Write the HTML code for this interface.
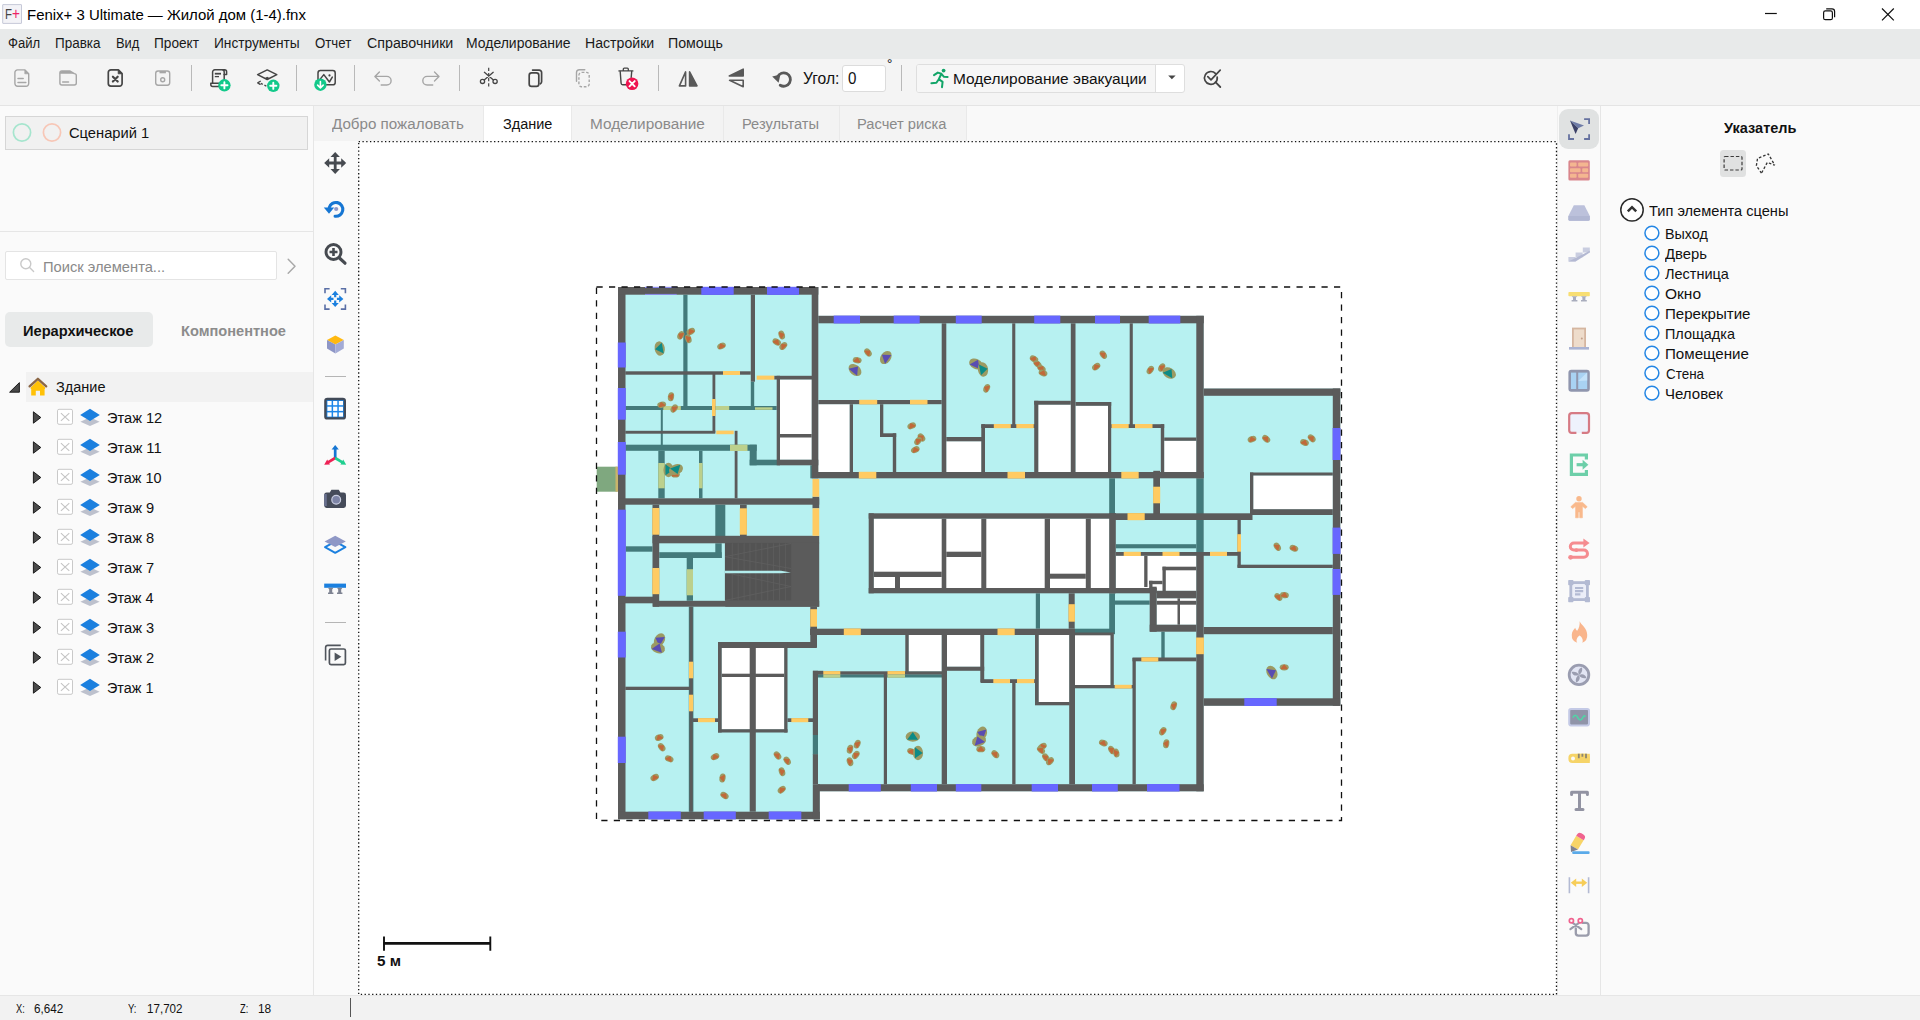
<!DOCTYPE html>
<html lang="ru"><head><meta charset="utf-8"><title>Fenix+ 3 Ultimate</title>
<style>
html,body{margin:0;padding:0;background:#fff;}
body{width:1920px;height:1020px;overflow:hidden;position:relative;font-family:"Liberation Sans", sans-serif;}
.b{position:absolute;box-sizing:border-box;}
.t{position:absolute;white-space:pre;line-height:1;transform-origin:0 0;display:block;}
svg{position:absolute;left:0;top:0;}
</style></head>
<body>
<div class="b" style="left:0px;top:0px;width:1920px;height:29px;background:#ffffff;"></div>
<div class="b" style="left:0px;top:29px;width:1920px;height:29.6px;background:#e8eaea;"></div>
<div class="b" style="left:0px;top:58.6px;width:1920px;height:46.4px;background:#f4f4f4;"></div>
<div class="b" style="left:0px;top:105px;width:1920px;height:1px;background:#e4e4e4;"></div>
<div class="b" style="left:0px;top:106px;width:1920px;height:889px;background:#fafafa;"></div>
<div class="b" style="left:313px;top:106px;width:1px;height:889px;background:#e6e6e6;"></div>
<div class="b" style="left:0px;top:231px;width:313px;height:1px;background:#e6e6e6;"></div>
<div class="b" style="left:5.3px;top:116px;width:302.3px;height:33.5px;background:#f1f1f1;border:1px solid #d6d6d6;"></div>
<div class="b" style="left:5.3px;top:250.5px;width:271.3px;height:29.9px;background:#ffffff;border:1px solid #e4e4e4;border-radius:2px;"></div>
<div class="b" style="left:5.3px;top:312.4px;width:147.7px;height:34.2px;background:#e8eaea;border-radius:5px;"></div>
<div class="b" style="left:26px;top:372.3px;width:287px;height:29.5px;background:#f2f2f2;"></div>
<div class="b" style="left:314px;top:106px;width:1243px;height:34.5px;background:#f3f3f3;"></div>
<div class="b" style="left:967.4px;top:106px;width:589.6px;height:35px;background:#f9f9f9;"></div>
<div class="b" style="left:1557px;top:106px;width:1px;height:889px;background:#efefef;"></div>
<div class="b" style="left:483.6px;top:106px;width:87.6px;height:34.5px;background:#ffffff;"></div>
<div class="b" style="left:483.2px;top:106px;width:1px;height:34.5px;background:#e9e9e9;"></div>
<div class="b" style="left:571.2px;top:106px;width:1px;height:34.5px;background:#e9e9e9;"></div>
<div class="b" style="left:722.9px;top:106px;width:1px;height:34.5px;background:#e9e9e9;"></div>
<div class="b" style="left:838.5px;top:106px;width:1px;height:34.5px;background:#e9e9e9;"></div>
<div class="b" style="left:966.4px;top:106px;width:1px;height:34.5px;background:#e9e9e9;"></div>
<div class="b" style="left:358.5px;top:141.5px;width:1198px;height:853px;background:#ffffff;"></div>
<div class="b" style="left:1600px;top:106px;width:1px;height:889px;background:#e6e6e6;"></div>
<div class="b" style="left:1559.4px;top:109.2px;width:39.4px;height:39.7px;background:#e0e2e2;border-radius:9px;"></div>
<div class="b" style="left:1720.2px;top:150.2px;width:25.7px;height:26.6px;background:#e0e1e1;border-radius:3.5px;"></div>
<div class="b" style="left:0px;top:995px;width:1920px;height:25px;background:#f2f2f2;"></div>
<div class="b" style="left:0px;top:995px;width:1920px;height:1px;background:#e6e6e6;"></div>
<div class="b" style="left:349.6px;top:998.3px;width:1.2px;height:18.5px;background:#555;"></div>
<div class="b" style="left:842.3px;top:64.6px;width:43.3px;height:27.5px;background:#ffffff;border:1px solid #dcdcdc;border-radius:3px;"></div>
<div class="b" style="left:916.3px;top:63.5px;width:268.9px;height:29.1px;background:#ffffff;border:1px solid #dedede;border-radius:3px;"></div>
<div class="b" style="left:917.3px;top:64.5px;width:239.2px;height:27.1px;background:#f6f6f6;border-right:1px solid #dedede;border-radius:2px 0 0 2px;"></div>
<div class="b" style="left:191.1px;top:65.3px;width:1.2px;height:25.5px;background:#b9b9b9;"></div>
<div class="b" style="left:296.1px;top:65.3px;width:1.2px;height:25.5px;background:#b9b9b9;"></div>
<div class="b" style="left:353.6px;top:65.3px;width:1.2px;height:25.5px;background:#b9b9b9;"></div>
<div class="b" style="left:458.9px;top:65.3px;width:1.2px;height:25.5px;background:#b9b9b9;"></div>
<div class="b" style="left:658.2px;top:65.3px;width:1.2px;height:25.5px;background:#b9b9b9;"></div>
<div class="b" style="left:900.6px;top:65.3px;width:1.2px;height:25.5px;background:#b9b9b9;"></div>
<div class="b" style="left:325px;top:376.1px;width:21px;height:1px;background:#b5b5b5;"></div>
<div class="b" style="left:325px;top:622.2px;width:21px;height:1px;background:#b5b5b5;"></div>
<svg width="1920" height="1020" viewBox="0 0 1920 1020">
<g shape-rendering="auto">
<rect x="618.0" y="287.0" width="200.3" height="532.2" fill="#b7f1f1"/>
<rect x="813.0" y="315.8" width="390.7" height="475.5" fill="#b7f1f1"/>
<rect x="1203.7" y="388.5" width="136.6" height="317.3" fill="#b7f1f1"/>
<rect x="813.0" y="791.3" width="7.0" height="27.9" fill="#b7f1f1"/>
<rect x="596.7" y="466.7" width="20.8" height="25.0" fill="#7fa87f"/>
<rect x="615.5" y="466.7" width="2.5" height="25.0" fill="#c9b46a"/>
<rect x="780.0" y="379.5" width="31.7" height="80.2" fill="#ffffff"/>
<rect x="721.7" y="648.0" width="62.5" height="81.2" fill="#ffffff"/>
<rect x="818.3" y="404.2" width="31.4" height="67.8" fill="#ffffff"/>
<rect x="946.3" y="441.3" width="35.0" height="30.7" fill="#ffffff"/>
<rect x="1038.3" y="404.7" width="32.5" height="67.3" fill="#ffffff"/>
<rect x="1075.5" y="405.8" width="32.5" height="66.2" fill="#ffffff"/>
<rect x="1164.2" y="440.8" width="32.1" height="31.2" fill="#ffffff"/>
<rect x="873.8" y="518.7" width="235.4" height="69.3" fill="#ffffff"/>
<rect x="908.7" y="635.0" width="33.0" height="36.3" fill="#ffffff"/>
<rect x="947.0" y="635.0" width="33.3" height="31.7" fill="#ffffff"/>
<rect x="1038.7" y="635.0" width="30.5" height="67.0" fill="#ffffff"/>
<rect x="1075.0" y="635.0" width="35.5" height="50.0" fill="#ffffff"/>
<rect x="1253.3" y="475.5" width="79.5" height="33.7" fill="#ffffff"/>
<rect x="1115.8" y="555.8" width="80.5" height="35.0" fill="#ffffff"/>
<rect x="1156.7" y="598.3" width="39.6" height="26.4" fill="#ffffff"/>
<rect x="683.3" y="294.7" width="4.2" height="113.3" fill="#437a7b"/>
<rect x="750.8" y="381.7" width="3.4" height="26.3" fill="#437a7b"/>
<rect x="625.3" y="406.0" width="151.4" height="4.0" fill="#437a7b"/>
<rect x="660.8" y="410.0" width="2.0" height="35.0" fill="#437a7b"/>
<rect x="625.3" y="444.7" width="131.4" height="6.1" fill="#437a7b"/>
<rect x="749.7" y="444.7" width="7.0" height="20.6" fill="#437a7b"/>
<rect x="749.7" y="459.7" width="28.3" height="5.6" fill="#437a7b"/>
<rect x="658.3" y="450.8" width="6.4" height="47.5" fill="#437a7b"/>
<rect x="699.0" y="450.8" width="3.5" height="47.5" fill="#437a7b"/>
<rect x="810.3" y="465.3" width="3.0" height="13.0" fill="#437a7b"/>
<rect x="715.3" y="504.7" width="10.0" height="32.0" fill="#437a7b"/>
<rect x="715.3" y="543.3" width="6.4" height="14.7" fill="#437a7b"/>
<rect x="625.8" y="546.3" width="26.7" height="5.4" fill="#437a7b"/>
<rect x="659.2" y="552.2" width="62.5" height="5.8" fill="#437a7b"/>
<rect x="686.7" y="558.0" width="6.3" height="42.8" fill="#437a7b"/>
<rect x="1109.2" y="478.3" width="5.8" height="35.7" fill="#437a7b"/>
<rect x="1196.3" y="478.3" width="7.4" height="73.7" fill="#437a7b"/>
<rect x="1115.8" y="544.2" width="80.5" height="4.1" fill="#437a7b"/>
<rect x="1109.2" y="593.3" width="5.8" height="40.9" fill="#437a7b"/>
<rect x="1115.0" y="600.5" width="34.7" height="4.2" fill="#437a7b"/>
<rect x="1035.8" y="593.3" width="4.2" height="35.4" fill="#437a7b"/>
<rect x="1074.7" y="628.7" width="38.3" height="4.3" fill="#437a7b"/>
<rect x="1161.3" y="631.7" width="3.4" height="26.3" fill="#437a7b"/>
<rect x="813.0" y="674.3" width="129.5" height="3.2" fill="#437a7b"/>
<rect x="688.8" y="606.7" width="4.6" height="205.0" fill="#437a7b"/>
<rect x="812.8" y="735.0" width="5.2" height="19.7" fill="#437a7b"/>
<rect x="618.0" y="287.0" width="7.5" height="532.2" fill="#5b5b5b"/>
<rect x="618.0" y="287.0" width="200.3" height="7.7" fill="#5b5b5b"/>
<rect x="811.7" y="287.0" width="6.6" height="191.3" fill="#5b5b5b"/>
<rect x="618.0" y="811.7" width="201.8" height="7.5" fill="#5b5b5b"/>
<rect x="812.8" y="754.2" width="5.2" height="30.0" fill="#5b5b5b"/>
<rect x="812.8" y="784.2" width="7.0" height="35.0" fill="#5b5b5b"/>
<rect x="812.8" y="670.8" width="5.2" height="64.2" fill="#5b5b5b"/>
<rect x="818.3" y="315.8" width="385.4" height="7.5" fill="#5b5b5b"/>
<rect x="1196.3" y="315.8" width="7.4" height="162.5" fill="#5b5b5b"/>
<rect x="1196.3" y="552.0" width="7.4" height="239.3" fill="#5b5b5b"/>
<rect x="818.0" y="784.2" width="385.7" height="7.1" fill="#5b5b5b"/>
<rect x="1203.7" y="388.5" width="136.6" height="7.3" fill="#5b5b5b"/>
<rect x="1332.8" y="388.5" width="7.5" height="317.3" fill="#5b5b5b"/>
<rect x="1203.7" y="698.3" width="136.6" height="7.5" fill="#5b5b5b"/>
<rect x="750.8" y="294.7" width="4.2" height="87.0" fill="#5b5b5b"/>
<rect x="625.3" y="371.3" width="125.5" height="3.4" fill="#5b5b5b"/>
<rect x="712.5" y="373.3" width="2.8" height="59.2" fill="#5b5b5b"/>
<rect x="774.2" y="375.8" width="38.8" height="3.7" fill="#5b5b5b"/>
<rect x="776.7" y="375.8" width="3.3" height="89.5" fill="#5b5b5b"/>
<rect x="780.0" y="434.0" width="31.7" height="3.5" fill="#5b5b5b"/>
<rect x="778.0" y="459.7" width="40.3" height="5.6" fill="#5b5b5b"/>
<rect x="625.3" y="430.8" width="90.0" height="2.9" fill="#5b5b5b"/>
<rect x="734.7" y="430.8" width="2.8" height="67.5" fill="#5b5b5b"/>
<rect x="618.0" y="498.3" width="201.2" height="6.4" fill="#5b5b5b"/>
<rect x="652.5" y="504.7" width="6.7" height="102.0" fill="#5b5b5b"/>
<rect x="652.5" y="535.8" width="166.7" height="7.5" fill="#5b5b5b"/>
<rect x="740.0" y="504.7" width="6.7" height="31.3" fill="#5b5b5b"/>
<rect x="812.5" y="496.7" width="6.7" height="11.6" fill="#5b5b5b"/>
<rect x="725.3" y="542.8" width="93.9" height="63.9" fill="#5b5b5b"/>
<rect x="618.0" y="596.7" width="35.3" height="6.6" fill="#5b5b5b"/>
<rect x="653.0" y="600.8" width="166.2" height="5.9" fill="#5b5b5b"/>
<rect x="689.5" y="606.7" width="3.2" height="205.0" fill="#5b5b5b"/>
<rect x="625.3" y="686.7" width="64.7" height="3.3" fill="#5b5b5b"/>
<rect x="810.3" y="606.7" width="6.7" height="40.8" fill="#5b5b5b"/>
<rect x="718.0" y="642.0" width="98.7" height="6.0" fill="#5b5b5b"/>
<rect x="718.0" y="642.0" width="3.7" height="90.5" fill="#5b5b5b"/>
<rect x="784.2" y="642.0" width="3.3" height="90.5" fill="#5b5b5b"/>
<rect x="718.0" y="729.2" width="69.5" height="3.3" fill="#5b5b5b"/>
<rect x="749.7" y="642.0" width="6.1" height="169.7" fill="#5b5b5b"/>
<rect x="721.7" y="673.7" width="62.5" height="3.3" fill="#5b5b5b"/>
<rect x="693.0" y="718.3" width="25.0" height="3.7" fill="#5b5b5b"/>
<rect x="787.5" y="718.3" width="25.8" height="3.7" fill="#5b5b5b"/>
<rect x="813.0" y="670.8" width="10.3" height="3.4" fill="#5b5b5b"/>
<rect x="941.7" y="323.3" width="4.6" height="148.7" fill="#5b5b5b"/>
<rect x="1012.2" y="323.3" width="3.1" height="104.2" fill="#5b5b5b"/>
<rect x="1070.8" y="323.3" width="4.7" height="148.7" fill="#5b5b5b"/>
<rect x="1129.7" y="323.3" width="3.1" height="104.2" fill="#5b5b5b"/>
<rect x="818.3" y="400.0" width="123.4" height="4.2" fill="#5b5b5b"/>
<rect x="849.7" y="404.2" width="3.3" height="67.8" fill="#5b5b5b"/>
<rect x="880.0" y="404.2" width="3.3" height="32.8" fill="#5b5b5b"/>
<rect x="880.0" y="433.3" width="16.2" height="3.7" fill="#5b5b5b"/>
<rect x="892.8" y="433.3" width="3.4" height="38.7" fill="#5b5b5b"/>
<rect x="946.3" y="437.0" width="38.7" height="4.3" fill="#5b5b5b"/>
<rect x="981.3" y="424.2" width="3.7" height="47.8" fill="#5b5b5b"/>
<rect x="981.3" y="424.2" width="56.7" height="3.8" fill="#5b5b5b"/>
<rect x="1034.2" y="400.8" width="4.1" height="71.2" fill="#5b5b5b"/>
<rect x="1034.2" y="400.8" width="36.6" height="3.9" fill="#5b5b5b"/>
<rect x="1075.5" y="402.0" width="35.7" height="3.8" fill="#5b5b5b"/>
<rect x="1108.0" y="402.0" width="3.2" height="70.0" fill="#5b5b5b"/>
<rect x="1111.2" y="424.2" width="53.0" height="3.8" fill="#5b5b5b"/>
<rect x="1160.8" y="424.2" width="3.4" height="47.8" fill="#5b5b5b"/>
<rect x="1164.2" y="437.5" width="32.1" height="3.3" fill="#5b5b5b"/>
<rect x="813.3" y="472.0" width="390.4" height="6.3" fill="#5b5b5b"/>
<rect x="868.7" y="513.3" width="247.1" height="5.4" fill="#5b5b5b"/>
<rect x="868.7" y="588.0" width="288.0" height="5.3" fill="#5b5b5b"/>
<rect x="868.7" y="513.3" width="5.1" height="80.0" fill="#5b5b5b"/>
<rect x="873.8" y="571.7" width="67.9" height="5.3" fill="#5b5b5b"/>
<rect x="895.0" y="577.0" width="5.0" height="11.0" fill="#5b5b5b"/>
<rect x="941.7" y="518.7" width="4.6" height="69.3" fill="#5b5b5b"/>
<rect x="946.3" y="551.7" width="35.0" height="5.3" fill="#5b5b5b"/>
<rect x="981.3" y="518.7" width="5.0" height="69.3" fill="#5b5b5b"/>
<rect x="1044.7" y="518.7" width="5.3" height="69.3" fill="#5b5b5b"/>
<rect x="1050.0" y="573.7" width="35.8" height="5.0" fill="#5b5b5b"/>
<rect x="1085.8" y="518.7" width="5.0" height="69.3" fill="#5b5b5b"/>
<rect x="1109.2" y="513.3" width="6.6" height="80.0" fill="#5b5b5b"/>
<rect x="1153.3" y="470.8" width="6.7" height="49.2" fill="#5b5b5b"/>
<rect x="1115.0" y="513.3" width="137.5" height="6.7" fill="#5b5b5b"/>
<rect x="1115.8" y="552.0" width="124.2" height="3.8" fill="#5b5b5b"/>
<rect x="1237.5" y="519.7" width="3.3" height="47.8" fill="#5b5b5b"/>
<rect x="1237.5" y="564.7" width="95.3" height="3.3" fill="#5b5b5b"/>
<rect x="1144.2" y="555.8" width="3.3" height="31.2" fill="#5b5b5b"/>
<rect x="1162.5" y="566.7" width="33.8" height="3.6" fill="#5b5b5b"/>
<rect x="1162.5" y="566.7" width="3.3" height="24.3" fill="#5b5b5b"/>
<rect x="1149.0" y="580.8" width="13.5" height="3.4" fill="#5b5b5b"/>
<rect x="1149.2" y="580.8" width="3.3" height="7.2" fill="#5b5b5b"/>
<rect x="1149.7" y="586.7" width="7.0" height="45.0" fill="#5b5b5b"/>
<rect x="1156.7" y="590.8" width="39.6" height="7.5" fill="#5b5b5b"/>
<rect x="1156.7" y="600.8" width="39.6" height="3.9" fill="#5b5b5b"/>
<rect x="1177.5" y="598.3" width="2.5" height="26.4" fill="#5b5b5b"/>
<rect x="1149.7" y="624.7" width="46.6" height="7.0" fill="#5b5b5b"/>
<rect x="1068.7" y="593.3" width="6.0" height="35.4" fill="#5b5b5b"/>
<rect x="810.0" y="628.7" width="265.0" height="6.3" fill="#5b5b5b"/>
<rect x="1074.7" y="632.5" width="39.1" height="2.8" fill="#5b5b5b"/>
<rect x="1203.7" y="627.0" width="129.1" height="7.2" fill="#5b5b5b"/>
<rect x="813.0" y="671.3" width="129.5" height="3.2" fill="#5b5b5b"/>
<rect x="883.8" y="673.3" width="3.2" height="110.9" fill="#5b5b5b"/>
<rect x="905.3" y="635.0" width="3.4" height="37.5" fill="#5b5b5b"/>
<rect x="941.7" y="635.0" width="5.3" height="149.2" fill="#5b5b5b"/>
<rect x="947.0" y="666.7" width="37.2" height="4.1" fill="#5b5b5b"/>
<rect x="980.3" y="635.0" width="3.9" height="47.5" fill="#5b5b5b"/>
<rect x="980.8" y="679.2" width="54.2" height="3.8" fill="#5b5b5b"/>
<rect x="1012.2" y="680.0" width="3.3" height="104.2" fill="#5b5b5b"/>
<rect x="1035.0" y="635.0" width="3.7" height="70.0" fill="#5b5b5b"/>
<rect x="1035.0" y="702.0" width="34.7" height="3.3" fill="#5b5b5b"/>
<rect x="1069.2" y="635.0" width="5.8" height="149.2" fill="#5b5b5b"/>
<rect x="1110.5" y="635.0" width="3.3" height="53.0" fill="#5b5b5b"/>
<rect x="1074.7" y="685.0" width="59.5" height="3.3" fill="#5b5b5b"/>
<rect x="1132.5" y="658.0" width="3.3" height="126.2" fill="#5b5b5b"/>
<rect x="1132.5" y="657.5" width="63.8" height="3.8" fill="#5b5b5b"/>
<rect x="1250.0" y="472.5" width="82.8" height="3.0" fill="#5b5b5b"/>
<rect x="1250.0" y="472.5" width="3.3" height="42.5" fill="#5b5b5b"/>
<rect x="1250.0" y="509.2" width="82.8" height="5.8" fill="#5b5b5b"/>
<rect x="724.9" y="543.1" width="66.2" height="57.3" fill="#535353"/>
<line x1="732.3" y1="543.3" x2="732.3" y2="600.3" stroke="#5d5d5d" stroke-width="0.9"/>
<line x1="738.2" y1="543.3" x2="738.2" y2="600.3" stroke="#5d5d5d" stroke-width="0.9"/>
<line x1="744.1" y1="543.3" x2="744.1" y2="600.3" stroke="#5d5d5d" stroke-width="0.9"/>
<line x1="750.0" y1="543.3" x2="750.0" y2="600.3" stroke="#5d5d5d" stroke-width="0.9"/>
<line x1="755.9" y1="543.3" x2="755.9" y2="600.3" stroke="#5d5d5d" stroke-width="0.9"/>
<line x1="761.8" y1="543.3" x2="761.8" y2="600.3" stroke="#5d5d5d" stroke-width="0.9"/>
<line x1="767.7" y1="543.3" x2="767.7" y2="600.3" stroke="#5d5d5d" stroke-width="0.9"/>
<line x1="773.6" y1="543.3" x2="773.6" y2="600.3" stroke="#5d5d5d" stroke-width="0.9"/>
<line x1="779.5" y1="543.3" x2="779.5" y2="600.3" stroke="#5d5d5d" stroke-width="0.9"/>
<line x1="785.4" y1="543.3" x2="785.4" y2="600.3" stroke="#5d5d5d" stroke-width="0.9"/>
<line x1="725.0" y1="556.7" x2="791.0" y2="543.5" stroke="#606060" stroke-width="0.8"/>
<line x1="725.0" y1="556.7" x2="791.0" y2="568.5" stroke="#606060" stroke-width="0.8"/>
<line x1="725.0" y1="572.5" x2="791.0" y2="586.5" stroke="#606060" stroke-width="0.8"/>
<line x1="725.0" y1="600.4" x2="791.0" y2="586.5" stroke="#606060" stroke-width="0.8"/>
<polygon points="724.9,570.8 781,570.7 791,572.6 781,573.2 724.9,573.2" fill="#b2eded"/>
<rect x="723.0" y="371.0" width="17.0" height="4.0" fill="#ffcb62"/>
<rect x="712.0" y="399.0" width="3.6" height="17.0" fill="#ffcb62"/>
<rect x="756.7" y="375.6" width="17.5" height="4.1" fill="#ffcb62"/>
<rect x="716.3" y="430.6" width="17.4" height="3.6" fill="#ffcb62"/>
<rect x="812.5" y="479.0" width="6.7" height="17.7" fill="#ffcb62"/>
<rect x="652.3" y="508.0" width="7.1" height="26.7" fill="#ffcb62"/>
<rect x="652.3" y="568.0" width="7.1" height="26.2" fill="#ffcb62"/>
<rect x="739.8" y="508.3" width="7.1" height="26.4" fill="#ffcb62"/>
<rect x="812.5" y="508.3" width="6.7" height="27.5" fill="#ffcb62"/>
<rect x="689.0" y="661.7" width="4.2" height="16.6" fill="#ffcb62"/>
<rect x="689.0" y="694.7" width="4.2" height="16.6" fill="#ffcb62"/>
<rect x="810.3" y="609.2" width="6.7" height="17.5" fill="#ffcb62"/>
<rect x="698.0" y="718.1" width="17.0" height="4.1" fill="#ffcb62"/>
<rect x="791.3" y="718.1" width="17.0" height="4.1" fill="#ffcb62"/>
<rect x="859.2" y="399.8" width="18.0" height="4.6" fill="#ffcb62"/>
<rect x="910.0" y="399.8" width="17.5" height="4.6" fill="#ffcb62"/>
<rect x="993.8" y="424.0" width="17.0" height="4.2" fill="#ffcb62"/>
<rect x="1016.3" y="424.0" width="17.4" height="4.2" fill="#ffcb62"/>
<rect x="1111.7" y="424.0" width="17.0" height="4.2" fill="#ffcb62"/>
<rect x="1135.0" y="424.0" width="17.5" height="4.2" fill="#ffcb62"/>
<rect x="858.8" y="471.8" width="17.5" height="6.7" fill="#ffcb62"/>
<rect x="1007.5" y="471.8" width="17.5" height="6.7" fill="#ffcb62"/>
<rect x="1121.3" y="471.8" width="17.4" height="6.7" fill="#ffcb62"/>
<rect x="1153.1" y="486.7" width="7.1" height="16.6" fill="#ffcb62"/>
<rect x="1127.5" y="513.1" width="17.2" height="7.1" fill="#ffcb62"/>
<rect x="1123.7" y="551.8" width="17.1" height="4.2" fill="#ffcb62"/>
<rect x="1162.5" y="551.8" width="17.0" height="4.2" fill="#ffcb62"/>
<rect x="1210.0" y="551.8" width="17.0" height="4.2" fill="#ffcb62"/>
<rect x="1237.3" y="534.2" width="3.7" height="17.5" fill="#ffcb62"/>
<rect x="1068.5" y="604.2" width="6.4" height="17.5" fill="#ffcb62"/>
<rect x="843.8" y="628.5" width="17.0" height="6.7" fill="#ffcb62"/>
<rect x="997.5" y="628.5" width="17.2" height="6.7" fill="#ffcb62"/>
<rect x="1196.1" y="637.5" width="7.8" height="16.7" fill="#ffcb62"/>
<rect x="823.3" y="671.1" width="17.0" height="3.4" fill="#ffcb62"/>
<rect x="887.5" y="671.1" width="17.5" height="3.4" fill="#ffcb62"/>
<rect x="993.3" y="679.0" width="16.7" height="4.2" fill="#ffcb62"/>
<rect x="1017.0" y="679.0" width="17.2" height="4.2" fill="#ffcb62"/>
<rect x="1114.7" y="684.8" width="17.0" height="3.7" fill="#ffcb62"/>
<rect x="1141.3" y="657.3" width="17.0" height="4.2" fill="#ffcb62"/>
<rect x="663.3" y="406.0" width="17.5" height="4.0" fill="#bcd08c"/>
<rect x="715.6" y="406.0" width="13.6" height="4.0" fill="#bcd08c"/>
<rect x="755.0" y="407.3" width="17.5" height="2.5" fill="#bcd08c"/>
<rect x="730.0" y="444.7" width="17.5" height="6.3" fill="#bcd08c"/>
<rect x="658.3" y="463.0" width="6.4" height="25.3" fill="#bcd08c"/>
<rect x="699.0" y="463.0" width="3.5" height="25.3" fill="#bcd08c"/>
<rect x="686.7" y="569.2" width="6.3" height="26.1" fill="#bcd08c"/>
<rect x="823.3" y="674.5" width="17.0" height="3.2" fill="#bcd08c"/>
<rect x="887.5" y="674.5" width="17.5" height="3.2" fill="#bcd08c"/>
<rect x="617.8" y="342.5" width="8.0" height="25.0" fill="#6767ff"/>
<rect x="617.8" y="388.0" width="8.0" height="31.7" fill="#6767ff"/>
<rect x="617.8" y="442.0" width="8.0" height="32.7" fill="#6767ff"/>
<rect x="617.8" y="509.7" width="8.0" height="86.1" fill="#6767ff"/>
<rect x="617.8" y="631.7" width="8.0" height="25.8" fill="#6767ff"/>
<rect x="617.8" y="736.7" width="8.0" height="26.3" fill="#6767ff"/>
<rect x="701.3" y="286.8" width="32.4" height="8.1" fill="#6767ff"/>
<rect x="767.0" y="286.8" width="32.0" height="8.1" fill="#6767ff"/>
<rect x="648.3" y="811.5" width="32.5" height="7.9" fill="#6767ff"/>
<rect x="703.7" y="811.5" width="32.1" height="7.9" fill="#6767ff"/>
<rect x="768.7" y="811.5" width="32.6" height="7.9" fill="#6767ff"/>
<rect x="833.7" y="315.6" width="26.3" height="7.9" fill="#6767ff"/>
<rect x="893.7" y="315.6" width="26.0" height="7.9" fill="#6767ff"/>
<rect x="955.8" y="315.6" width="25.9" height="7.9" fill="#6767ff"/>
<rect x="1034.2" y="315.6" width="26.1" height="7.9" fill="#6767ff"/>
<rect x="1095.0" y="315.6" width="25.0" height="7.9" fill="#6767ff"/>
<rect x="1148.7" y="315.6" width="31.6" height="7.9" fill="#6767ff"/>
<rect x="848.7" y="784.0" width="32.1" height="7.5" fill="#6767ff"/>
<rect x="910.8" y="784.0" width="26.2" height="7.5" fill="#6767ff"/>
<rect x="955.8" y="784.0" width="25.5" height="7.5" fill="#6767ff"/>
<rect x="1031.7" y="784.0" width="26.3" height="7.5" fill="#6767ff"/>
<rect x="1092.0" y="784.0" width="25.8" height="7.5" fill="#6767ff"/>
<rect x="1147.0" y="784.0" width="32.5" height="7.5" fill="#6767ff"/>
<rect x="1332.6" y="428.0" width="7.9" height="32.0" fill="#6767ff"/>
<rect x="1332.6" y="527.6" width="7.9" height="26.3" fill="#6767ff"/>
<rect x="1332.6" y="569.0" width="7.9" height="25.9" fill="#6767ff"/>
<rect x="1244.3" y="698.1" width="32.4" height="7.9" fill="#6767ff"/>
<rect x="645.0" y="286.8" width="31.7" height="1.2" fill="#8c8cf0"/>
<rect x="645.0" y="293.9" width="31.7" height="1.0" fill="#8c8cf0"/>
<g transform="translate(680.8 335.3) rotate(-60)"><ellipse rx="4.5" ry="3.1" fill="#9b9a63"/><path d="M-2.700 1.300L0 -2L2.600 1.300Z" fill="#c1693a" stroke="#c1693a" stroke-width="1.400" stroke-linejoin="round"/></g>
<g transform="translate(690.8 331.5) rotate(-30)"><ellipse rx="4.5" ry="3.1" fill="#9b9a63"/><path d="M-2.700 1.300L0 -2L2.600 1.300Z" fill="#c1693a" stroke="#c1693a" stroke-width="1.400" stroke-linejoin="round"/></g>
<g transform="translate(688.3 338.7) rotate(70)"><ellipse rx="4.5" ry="3.1" fill="#9b9a63"/><path d="M-2.700 1.300L0 -2L2.600 1.300Z" fill="#c1693a" stroke="#c1693a" stroke-width="1.400" stroke-linejoin="round"/></g>
<g transform="translate(721.5 346.0) rotate(-25)"><ellipse rx="4.5" ry="3.1" fill="#9b9a63"/><path d="M-2.700 1.300L0 -2L2.600 1.300Z" fill="#c1693a" stroke="#c1693a" stroke-width="1.400" stroke-linejoin="round"/></g>
<g transform="translate(781.7 335.0) rotate(70)"><ellipse rx="4.5" ry="3.1" fill="#9b9a63"/><path d="M-2.700 1.300L0 -2L2.600 1.300Z" fill="#c1693a" stroke="#c1693a" stroke-width="1.400" stroke-linejoin="round"/></g>
<g transform="translate(776.7 342.0) rotate(30)"><ellipse rx="4.5" ry="3.1" fill="#9b9a63"/><path d="M-2.700 1.300L0 -2L2.600 1.300Z" fill="#c1693a" stroke="#c1693a" stroke-width="1.400" stroke-linejoin="round"/></g>
<g transform="translate(783.3 346.0) rotate(-45)"><ellipse rx="4.5" ry="3.1" fill="#9b9a63"/><path d="M-2.700 1.300L0 -2L2.600 1.300Z" fill="#c1693a" stroke="#c1693a" stroke-width="1.400" stroke-linejoin="round"/></g>
<g transform="translate(671.0 396.7) rotate(-80)"><ellipse rx="4.5" ry="3.1" fill="#9b9a63"/><path d="M-2.700 1.300L0 -2L2.600 1.300Z" fill="#c1693a" stroke="#c1693a" stroke-width="1.400" stroke-linejoin="round"/></g>
<g transform="translate(661.7 404.7) rotate(-15)"><ellipse rx="4.5" ry="3.1" fill="#9b9a63"/><path d="M-2.700 1.300L0 -2L2.600 1.300Z" fill="#c1693a" stroke="#c1693a" stroke-width="1.400" stroke-linejoin="round"/></g>
<g transform="translate(674.2 408.5) rotate(-55)"><ellipse rx="4.5" ry="3.1" fill="#9b9a63"/><path d="M-2.700 1.300L0 -2L2.600 1.300Z" fill="#c1693a" stroke="#c1693a" stroke-width="1.400" stroke-linejoin="round"/></g>
<g transform="translate(675.3 474.5) rotate(0)"><ellipse rx="4.5" ry="3.1" fill="#9b9a63"/><path d="M-2.700 1.300L0 -2L2.600 1.300Z" fill="#c1693a" stroke="#c1693a" stroke-width="1.400" stroke-linejoin="round"/></g>
<g transform="translate(659.2 737.5) rotate(-20)"><ellipse rx="4.5" ry="3.1" fill="#9b9a63"/><path d="M-2.700 1.300L0 -2L2.600 1.300Z" fill="#c1693a" stroke="#c1693a" stroke-width="1.400" stroke-linejoin="round"/></g>
<g transform="translate(661.7 747.2) rotate(50)"><ellipse rx="4.5" ry="3.1" fill="#9b9a63"/><path d="M-2.700 1.300L0 -2L2.600 1.300Z" fill="#c1693a" stroke="#c1693a" stroke-width="1.400" stroke-linejoin="round"/></g>
<g transform="translate(669.2 758.8) rotate(25)"><ellipse rx="4.5" ry="3.1" fill="#9b9a63"/><path d="M-2.700 1.300L0 -2L2.600 1.300Z" fill="#c1693a" stroke="#c1693a" stroke-width="1.400" stroke-linejoin="round"/></g>
<g transform="translate(654.7 777.5) rotate(-30)"><ellipse rx="4.5" ry="3.1" fill="#9b9a63"/><path d="M-2.700 1.300L0 -2L2.600 1.300Z" fill="#c1693a" stroke="#c1693a" stroke-width="1.400" stroke-linejoin="round"/></g>
<g transform="translate(715.0 756.7) rotate(-25)"><ellipse rx="4.5" ry="3.1" fill="#9b9a63"/><path d="M-2.700 1.300L0 -2L2.600 1.300Z" fill="#c1693a" stroke="#c1693a" stroke-width="1.400" stroke-linejoin="round"/></g>
<g transform="translate(722.5 778.0) rotate(-80)"><ellipse rx="4.5" ry="3.1" fill="#9b9a63"/><path d="M-2.700 1.300L0 -2L2.600 1.300Z" fill="#c1693a" stroke="#c1693a" stroke-width="1.400" stroke-linejoin="round"/></g>
<g transform="translate(724.5 795.5) rotate(35)"><ellipse rx="4.5" ry="3.1" fill="#9b9a63"/><path d="M-2.700 1.300L0 -2L2.600 1.300Z" fill="#c1693a" stroke="#c1693a" stroke-width="1.400" stroke-linejoin="round"/></g>
<g transform="translate(777.5 755.5) rotate(50)"><ellipse rx="4.5" ry="3.1" fill="#9b9a63"/><path d="M-2.700 1.300L0 -2L2.600 1.300Z" fill="#c1693a" stroke="#c1693a" stroke-width="1.400" stroke-linejoin="round"/></g>
<g transform="translate(787.2 760.8) rotate(55)"><ellipse rx="4.5" ry="3.1" fill="#9b9a63"/><path d="M-2.700 1.300L0 -2L2.600 1.300Z" fill="#c1693a" stroke="#c1693a" stroke-width="1.400" stroke-linejoin="round"/></g>
<g transform="translate(782.0 771.7) rotate(70)"><ellipse rx="4.5" ry="3.1" fill="#9b9a63"/><path d="M-2.700 1.300L0 -2L2.600 1.300Z" fill="#c1693a" stroke="#c1693a" stroke-width="1.400" stroke-linejoin="round"/></g>
<g transform="translate(781.7 789.7) rotate(-40)"><ellipse rx="4.5" ry="3.1" fill="#9b9a63"/><path d="M-2.700 1.300L0 -2L2.600 1.300Z" fill="#c1693a" stroke="#c1693a" stroke-width="1.400" stroke-linejoin="round"/></g>
<g transform="translate(868.0 352.5) rotate(50)"><ellipse rx="4.5" ry="3.1" fill="#9b9a63"/><path d="M-2.700 1.300L0 -2L2.600 1.300Z" fill="#c1693a" stroke="#c1693a" stroke-width="1.400" stroke-linejoin="round"/></g>
<g transform="translate(857.2 360.3) rotate(10)"><ellipse rx="4.5" ry="3.1" fill="#9b9a63"/><path d="M-2.700 1.300L0 -2L2.600 1.300Z" fill="#c1693a" stroke="#c1693a" stroke-width="1.400" stroke-linejoin="round"/></g>
<g transform="translate(986.7 388.3) rotate(-65)"><ellipse rx="4.5" ry="3.1" fill="#9b9a63"/><path d="M-2.700 1.300L0 -2L2.600 1.300Z" fill="#c1693a" stroke="#c1693a" stroke-width="1.400" stroke-linejoin="round"/></g>
<g transform="translate(1034.0 359.0) rotate(30)"><ellipse rx="4.5" ry="3.1" fill="#9b9a63"/><path d="M-2.700 1.300L0 -2L2.600 1.300Z" fill="#c1693a" stroke="#c1693a" stroke-width="1.400" stroke-linejoin="round"/></g>
<g transform="translate(1037.5 364.0) rotate(40)"><ellipse rx="4.5" ry="3.1" fill="#9b9a63"/><path d="M-2.700 1.300L0 -2L2.600 1.300Z" fill="#c1693a" stroke="#c1693a" stroke-width="1.400" stroke-linejoin="round"/></g>
<g transform="translate(1041.5 368.5) rotate(35)"><ellipse rx="4.5" ry="3.1" fill="#9b9a63"/><path d="M-2.700 1.300L0 -2L2.600 1.300Z" fill="#c1693a" stroke="#c1693a" stroke-width="1.400" stroke-linejoin="round"/></g>
<g transform="translate(1043.0 373.0) rotate(20)"><ellipse rx="4.5" ry="3.1" fill="#9b9a63"/><path d="M-2.700 1.300L0 -2L2.600 1.300Z" fill="#c1693a" stroke="#c1693a" stroke-width="1.400" stroke-linejoin="round"/></g>
<g transform="translate(911.7 425.8) rotate(-25)"><ellipse rx="4.5" ry="3.1" fill="#9b9a63"/><path d="M-2.700 1.300L0 -2L2.600 1.300Z" fill="#c1693a" stroke="#c1693a" stroke-width="1.400" stroke-linejoin="round"/></g>
<g transform="translate(921.5 437.5) rotate(50)"><ellipse rx="4.5" ry="3.1" fill="#9b9a63"/><path d="M-2.700 1.300L0 -2L2.600 1.300Z" fill="#c1693a" stroke="#c1693a" stroke-width="1.400" stroke-linejoin="round"/></g>
<g transform="translate(918.0 441.0) rotate(-50)"><ellipse rx="4.5" ry="3.1" fill="#9b9a63"/><path d="M-2.700 1.300L0 -2L2.600 1.300Z" fill="#c1693a" stroke="#c1693a" stroke-width="1.400" stroke-linejoin="round"/></g>
<g transform="translate(915.3 449.7) rotate(-25)"><ellipse rx="4.5" ry="3.1" fill="#9b9a63"/><path d="M-2.700 1.300L0 -2L2.600 1.300Z" fill="#c1693a" stroke="#c1693a" stroke-width="1.400" stroke-linejoin="round"/></g>
<g transform="translate(1103.3 354.7) rotate(55)"><ellipse rx="4.5" ry="3.1" fill="#9b9a63"/><path d="M-2.700 1.300L0 -2L2.600 1.300Z" fill="#c1693a" stroke="#c1693a" stroke-width="1.400" stroke-linejoin="round"/></g>
<g transform="translate(1096.2 366.7) rotate(-35)"><ellipse rx="4.5" ry="3.1" fill="#9b9a63"/><path d="M-2.700 1.300L0 -2L2.600 1.300Z" fill="#c1693a" stroke="#c1693a" stroke-width="1.400" stroke-linejoin="round"/></g>
<g transform="translate(1150.3 370.0) rotate(-55)"><ellipse rx="4.5" ry="3.1" fill="#9b9a63"/><path d="M-2.700 1.300L0 -2L2.600 1.300Z" fill="#c1693a" stroke="#c1693a" stroke-width="1.400" stroke-linejoin="round"/></g>
<g transform="translate(1161.7 367.5) rotate(-60)"><ellipse rx="4.5" ry="3.1" fill="#9b9a63"/><path d="M-2.700 1.300L0 -2L2.600 1.300Z" fill="#c1693a" stroke="#c1693a" stroke-width="1.400" stroke-linejoin="round"/></g>
<g transform="translate(1252.0 439.2) rotate(-20)"><ellipse rx="4.5" ry="3.1" fill="#9b9a63"/><path d="M-2.700 1.300L0 -2L2.600 1.300Z" fill="#c1693a" stroke="#c1693a" stroke-width="1.400" stroke-linejoin="round"/></g>
<g transform="translate(1266.2 438.8) rotate(40)"><ellipse rx="4.5" ry="3.1" fill="#9b9a63"/><path d="M-2.700 1.300L0 -2L2.600 1.300Z" fill="#c1693a" stroke="#c1693a" stroke-width="1.400" stroke-linejoin="round"/></g>
<g transform="translate(1304.5 442.5) rotate(20)"><ellipse rx="4.5" ry="3.1" fill="#9b9a63"/><path d="M-2.700 1.300L0 -2L2.600 1.300Z" fill="#c1693a" stroke="#c1693a" stroke-width="1.400" stroke-linejoin="round"/></g>
<g transform="translate(1311.7 438.3) rotate(45)"><ellipse rx="4.5" ry="3.1" fill="#9b9a63"/><path d="M-2.700 1.300L0 -2L2.600 1.300Z" fill="#c1693a" stroke="#c1693a" stroke-width="1.400" stroke-linejoin="round"/></g>
<g transform="translate(1277.3 546.8) rotate(55)"><ellipse rx="4.5" ry="3.1" fill="#9b9a63"/><path d="M-2.700 1.300L0 -2L2.600 1.300Z" fill="#c1693a" stroke="#c1693a" stroke-width="1.400" stroke-linejoin="round"/></g>
<g transform="translate(1293.9 548.3) rotate(20)"><ellipse rx="4.5" ry="3.1" fill="#9b9a63"/><path d="M-2.700 1.300L0 -2L2.600 1.300Z" fill="#c1693a" stroke="#c1693a" stroke-width="1.400" stroke-linejoin="round"/></g>
<g transform="translate(1278.4 597.0) rotate(40)"><ellipse rx="4.5" ry="3.1" fill="#9b9a63"/><path d="M-2.700 1.300L0 -2L2.600 1.300Z" fill="#c1693a" stroke="#c1693a" stroke-width="1.400" stroke-linejoin="round"/></g>
<g transform="translate(1284.4 595.1) rotate(10)"><ellipse rx="4.5" ry="3.1" fill="#9b9a63"/><path d="M-2.700 1.300L0 -2L2.600 1.300Z" fill="#c1693a" stroke="#c1693a" stroke-width="1.400" stroke-linejoin="round"/></g>
<g transform="translate(1284.2 667.3) rotate(0)"><ellipse rx="4.5" ry="3.1" fill="#9b9a63"/><path d="M-2.700 1.300L0 -2L2.600 1.300Z" fill="#c1693a" stroke="#c1693a" stroke-width="1.400" stroke-linejoin="round"/></g>
<g transform="translate(857.2 744.2) rotate(-65)"><ellipse rx="4.5" ry="3.1" fill="#9b9a63"/><path d="M-2.700 1.300L0 -2L2.600 1.300Z" fill="#c1693a" stroke="#c1693a" stroke-width="1.400" stroke-linejoin="round"/></g>
<g transform="translate(850.0 749.2) rotate(-75)"><ellipse rx="4.5" ry="3.1" fill="#9b9a63"/><path d="M-2.700 1.300L0 -2L2.600 1.300Z" fill="#c1693a" stroke="#c1693a" stroke-width="1.400" stroke-linejoin="round"/></g>
<g transform="translate(855.8 755.0) rotate(-50)"><ellipse rx="4.5" ry="3.1" fill="#9b9a63"/><path d="M-2.700 1.300L0 -2L2.600 1.300Z" fill="#c1693a" stroke="#c1693a" stroke-width="1.400" stroke-linejoin="round"/></g>
<g transform="translate(850.0 761.7) rotate(70)"><ellipse rx="4.5" ry="3.1" fill="#9b9a63"/><path d="M-2.700 1.300L0 -2L2.600 1.300Z" fill="#c1693a" stroke="#c1693a" stroke-width="1.400" stroke-linejoin="round"/></g>
<g transform="translate(911.5 751.5) rotate(25)"><ellipse rx="4.5" ry="3.1" fill="#9b9a63"/><path d="M-2.700 1.300L0 -2L2.600 1.300Z" fill="#c1693a" stroke="#c1693a" stroke-width="1.400" stroke-linejoin="round"/></g>
<g transform="translate(980.8 749.2) rotate(0)"><ellipse rx="4.5" ry="3.1" fill="#9b9a63"/><path d="M-2.700 1.300L0 -2L2.600 1.300Z" fill="#c1693a" stroke="#c1693a" stroke-width="1.400" stroke-linejoin="round"/></g>
<g transform="translate(995.3 754.2) rotate(45)"><ellipse rx="4.5" ry="3.1" fill="#9b9a63"/><path d="M-2.700 1.300L0 -2L2.600 1.300Z" fill="#c1693a" stroke="#c1693a" stroke-width="1.400" stroke-linejoin="round"/></g>
<g transform="translate(1042.5 746.5) rotate(-30)"><ellipse rx="4.5" ry="3.1" fill="#9b9a63"/><path d="M-2.700 1.300L0 -2L2.600 1.300Z" fill="#c1693a" stroke="#c1693a" stroke-width="1.400" stroke-linejoin="round"/></g>
<g transform="translate(1041.0 750.0) rotate(40)"><ellipse rx="4.5" ry="3.1" fill="#9b9a63"/><path d="M-2.700 1.300L0 -2L2.600 1.300Z" fill="#c1693a" stroke="#c1693a" stroke-width="1.400" stroke-linejoin="round"/></g>
<g transform="translate(1045.8 757.5) rotate(55)"><ellipse rx="4.5" ry="3.1" fill="#9b9a63"/><path d="M-2.700 1.300L0 -2L2.600 1.300Z" fill="#c1693a" stroke="#c1693a" stroke-width="1.400" stroke-linejoin="round"/></g>
<g transform="translate(1050.0 761.2) rotate(-45)"><ellipse rx="4.5" ry="3.1" fill="#9b9a63"/><path d="M-2.700 1.300L0 -2L2.600 1.300Z" fill="#c1693a" stroke="#c1693a" stroke-width="1.400" stroke-linejoin="round"/></g>
<g transform="translate(1103.3 743.0) rotate(20)"><ellipse rx="4.5" ry="3.1" fill="#9b9a63"/><path d="M-2.700 1.300L0 -2L2.600 1.300Z" fill="#c1693a" stroke="#c1693a" stroke-width="1.400" stroke-linejoin="round"/></g>
<g transform="translate(1111.7 750.0) rotate(60)"><ellipse rx="4.5" ry="3.1" fill="#9b9a63"/><path d="M-2.700 1.300L0 -2L2.600 1.300Z" fill="#c1693a" stroke="#c1693a" stroke-width="1.400" stroke-linejoin="round"/></g>
<g transform="translate(1116.2 753.0) rotate(75)"><ellipse rx="4.5" ry="3.1" fill="#9b9a63"/><path d="M-2.700 1.300L0 -2L2.600 1.300Z" fill="#c1693a" stroke="#c1693a" stroke-width="1.400" stroke-linejoin="round"/></g>
<g transform="translate(1173.7 705.8) rotate(-70)"><ellipse rx="4.5" ry="3.1" fill="#9b9a63"/><path d="M-2.700 1.300L0 -2L2.600 1.300Z" fill="#c1693a" stroke="#c1693a" stroke-width="1.400" stroke-linejoin="round"/></g>
<g transform="translate(1162.8 731.2) rotate(-55)"><ellipse rx="4.5" ry="3.1" fill="#9b9a63"/><path d="M-2.700 1.300L0 -2L2.600 1.300Z" fill="#c1693a" stroke="#c1693a" stroke-width="1.400" stroke-linejoin="round"/></g>
<g transform="translate(1166.2 743.8) rotate(-80)"><ellipse rx="4.5" ry="3.1" fill="#9b9a63"/><path d="M-2.700 1.300L0 -2L2.600 1.300Z" fill="#c1693a" stroke="#c1693a" stroke-width="1.400" stroke-linejoin="round"/></g>
<g transform="translate(659.7 348.5) rotate(-100)"><ellipse rx="7.2" ry="5.1" fill="#9b9a63"/><polygon points="-5.700,3.100 0,-4.700 5.300,3" fill="#0d8b86"/></g>
<g transform="translate(668.5 470.0) rotate(90)"><ellipse rx="7.2" ry="5.1" fill="#9b9a63"/><polygon points="-5.700,3.100 0,-4.700 5.300,3" fill="#0d8b86"/></g>
<g transform="translate(676.0 469.5) rotate(160)"><ellipse rx="7.2" ry="5.1" fill="#9b9a63"/><polygon points="-5.700,3.100 0,-4.700 5.300,3" fill="#0d8b86"/></g>
<g transform="translate(659.5 640.0) rotate(-60)"><ellipse rx="7.2" ry="5.1" fill="#9b9a63"/><polygon points="-5.700,3.100 0,-4.700 5.300,3" fill="#594db3"/></g>
<g transform="translate(658.0 648.0) rotate(20)"><ellipse rx="7.2" ry="5.1" fill="#9b9a63"/><polygon points="-5.700,3.100 0,-4.700 5.300,3" fill="#594db3"/></g>
<g transform="translate(855.0 370.0) rotate(40)"><ellipse rx="7.2" ry="5.1" fill="#9b9a63"/><polygon points="-5.700,3.100 0,-4.700 5.300,3" fill="#594db3"/></g>
<g transform="translate(885.8 357.5) rotate(-55)"><ellipse rx="7.2" ry="5.1" fill="#9b9a63"/><polygon points="-5.700,3.100 0,-4.700 5.300,3" fill="#594db3"/></g>
<g transform="translate(976.0 364.0) rotate(25)"><ellipse rx="7.2" ry="5.1" fill="#9b9a63"/><polygon points="-5.700,3.100 0,-4.700 5.300,3" fill="#594db3"/></g>
<g transform="translate(983.0 369.5) rotate(80)"><ellipse rx="7.2" ry="5.1" fill="#9b9a63"/><polygon points="-5.700,3.100 0,-4.700 5.300,3" fill="#0d8b86"/></g>
<g transform="translate(1169.2 373.0) rotate(30)"><ellipse rx="7.2" ry="5.1" fill="#9b9a63"/><polygon points="-5.700,3.100 0,-4.700 5.300,3" fill="#0d8b86"/></g>
<g transform="translate(912.8 736.7) rotate(0)"><ellipse rx="7.2" ry="5.1" fill="#9b9a63"/><polygon points="-5.700,3.100 0,-4.700 5.300,3" fill="#0d8b86"/></g>
<g transform="translate(918.0 753.0) rotate(90)"><ellipse rx="7.2" ry="5.1" fill="#9b9a63"/><polygon points="-5.700,3.100 0,-4.700 5.300,3" fill="#0d8b86"/></g>
<g transform="translate(981.7 733.5) rotate(-70)"><ellipse rx="7.2" ry="5.1" fill="#9b9a63"/><polygon points="-5.700,3.100 0,-4.700 5.300,3" fill="#594db3"/></g>
<g transform="translate(979.0 741.0) rotate(-20)"><ellipse rx="7.2" ry="5.1" fill="#9b9a63"/><polygon points="-5.700,3.100 0,-4.700 5.300,3" fill="#594db3"/></g>
<g transform="translate(1271.9 672.5) rotate(60)"><ellipse rx="7.2" ry="5.1" fill="#9b9a63"/><polygon points="-5.700,3.100 0,-4.700 5.300,3" fill="#594db3"/></g>
<rect x="596.5" y="287" width="745" height="533.5" fill="none" stroke="#111" stroke-width="1.3" stroke-dasharray="6.2 6.3"/>
</g>
<rect x="358.700" y="141.700" width="1197.800" height="852.700" fill="none" stroke="#111" stroke-width="1.300" stroke-dasharray="1.300 2.460"/>
<path d="M383.300 943.400h107.400" stroke="#111" stroke-width="2.800"/><path d="M384 936.600v14.200M490.300 936.600v14.200" stroke="#111" stroke-width="1.900"/>
<rect x="2.700" y="4.600" width="18.800" height="18.800" rx="0.300" fill="#f3f3f7" stroke="#c6c9d8" stroke-width="1"/>
<path d="M1765 13.5h11.8" stroke="#111" stroke-width="1.2"/>
<rect x="1823.6" y="10.9" width="8.8" height="8.8" rx="1.8" fill="none" stroke="#111" stroke-width="1.2"/>
<path d="M1826.2 8.8h5.8a2.6 2.6 0 0 1 2.6 2.6v5.8" fill="none" stroke="#111" stroke-width="1.2"/>
<path d="M1882 8.5l11.8 11.8M1893.8 8.5l-11.8 11.8" stroke="#111" stroke-width="1.2"/>
<g transform="translate(14.2 69.2)" ><path d="M3.300 0.700h7.500l3.700 3.800v9.900a2.600 2.600 0 0 1-2.600 2.600H3.300a2.600 2.600 0 0 1-2.600-2.600V3.300a2.600 2.600 0 0 1 2.600-2.600z" fill="none" stroke="#a6a6a6" stroke-width="1.4" stroke-linejoin="round"/><path d="M10.600 1v3.600h3.700z" fill="#a6a6a6" stroke="#a6a6a6" stroke-width="0.7" stroke-linejoin="round"/><path d="M3.800 9.300h5.200M3.800 13.300h7.800" stroke="#a6a6a6" stroke-width="1.500" stroke-linecap="round"/></g>
<path d="M59.900 83V72.900a2 2 0 0 1 2-2h7.800l4.600 2.700h0a2 2 0 0 1 2 2v7.400a2 2 0 0 1-2 2H61.900a2 2 0 0 1-2-2z" fill="none" stroke="#a6a6a6" stroke-width="1.400" stroke-linejoin="round"/>
<path d="M59.900 73.800v-0.900a2 2 0 0 1 2-2h7.800l4.800 2.900z" fill="#a6a6a6"/>
<path d="M62.700 82h5.800" stroke="#a6a6a6" stroke-width="1.500" stroke-linecap="round"/>
<g transform="translate(107.6 69.2)" ><path d="M3.300 0.700h7.500l3.700 3.800v9.900a2.600 2.600 0 0 1-2.600 2.600H3.300a2.600 2.600 0 0 1-2.600-2.600V3.300a2.600 2.600 0 0 1 2.600-2.600z" fill="none" stroke="#454545" stroke-width="1.7" stroke-linejoin="round"/><path d="M10.600 1v3.600h3.700z" fill="#454545" stroke="#454545" stroke-width="0.85" stroke-linejoin="round"/><path d="M5.300 7.500l4.800 4.800M10.100 7.500l-4.800 4.800" stroke="#454545" stroke-width="2.200" stroke-linecap="round"/></g>
<rect x="155.7" y="71" width="14" height="14.2" rx="2.4" fill="none" stroke="#a6a6a6" stroke-width="1.4"/>
<rect x="159.500" y="71" width="6.400" height="2.300" fill="#a6a6a6"/>
<circle cx="162.700" cy="79.700" r="2" fill="none" stroke="#a6a6a6" stroke-width="1.4"/>
<path d="M212.6 83.2V72a2.2 2.2 0 0 1 2.2-2.2h9.8a2 2 0 0 1 2 2v2.6h-2.4V72a2 2 0 0 0-2-2" fill="none" stroke="#454545" stroke-width="1.5" stroke-linejoin="round"/>
<path d="M224.2 74v7" stroke="#454545" stroke-width="1.5"/>
<path d="M210.8 83.2h10.5v1.2a2 2 0 0 1-2 2h-6.5a2 2 0 0 1-2-2z" fill="#f4f4f4" stroke="#454545" stroke-width="1.5" stroke-linejoin="round"/>
<path d="M214.8 73.7h6.2" stroke="#454545" stroke-width="1.8"/><path d="M214.8 76.6h4.2" stroke="#454545" stroke-width="1.3"/>
<circle cx="224.4" cy="85.3" r="6.2" fill="#12c98a"/>
<path d="M221.3 85.3h6.2M224.4 82.2v6.2" stroke="#fff" stroke-width="1.9" stroke-linecap="round"/>
<path d="M267.2 69.9l9.6 4.7-9.6 4.9-9.6-4.9z" fill="none" stroke="#454545" stroke-width="1.5" stroke-linejoin="round"/>
<path d="M264.6 78.2l2.6-1.5 2.6 1.5-2.6 1.4z" fill="#454545"/>
<path d="M260.3 81.3l-2.6 1.6 2.4 1.5" fill="none" stroke="#454545" stroke-width="1.3" stroke-linecap="round" stroke-linejoin="round"/>
<path d="M260.8 83.4l6 2.9" stroke="#454545" stroke-width="1.3" stroke-dasharray="2.2 1.8"/>
<circle cx="273.3" cy="85.8" r="6.2" fill="#12c98a"/>
<path d="M270.2 85.8h6.2M273.3 82.7v6.2" stroke="#fff" stroke-width="1.9" stroke-linecap="round"/>
<rect x="318" y="70.600" width="17.200" height="14.200" rx="2.400" fill="none" stroke="#454545" stroke-width="1.500"/>
<path d="M319 80.600l4.800-6 5.600 7.400 2.900-4.900" fill="none" stroke="#454545" stroke-width="1.500" stroke-linejoin="round" stroke-linecap="round"/>
<circle cx="329.500" cy="75.400" r="1.100" fill="#454545"/>
<circle cx="320.4" cy="84.7" r="6.2" fill="#12c98a"/>
<path d="M320.4 81.5v6M317.6 85.1l2.8 2.8l2.8 -2.8" fill="none" stroke="#fff" stroke-width="1.6" stroke-linecap="round" stroke-linejoin="round"/>
<path d="M379.4 71.9l-4.5 4.5 4.5 4.5M375.2 76.4h11.6a4.3 4.3 0 0 1 0 8.6h-5.6" fill="none" stroke="#a6a6a6" stroke-width="1.4" stroke-linecap="round" stroke-linejoin="round"/>
<path d="M434.5 71.9l4.5 4.5-4.5 4.5M438.7 76.4h-11.6a4.3 4.3 0 0 0 0 8.6h5.6" fill="none" stroke="#a6a6a6" stroke-width="1.4" stroke-linecap="round" stroke-linejoin="round"/>
<path d="M488.7 67.7v20.6" stroke="#454545" stroke-width="1.2" stroke-dasharray="3.2 2"/>
<circle cx="482.500" cy="81.400" r="2.100" fill="none" stroke="#454545" stroke-width="1.300"/><circle cx="495.100" cy="81.400" r="2.100" fill="none" stroke="#454545" stroke-width="1.300"/>
<path d="M484.200 79.900l9-7.600M493.400 79.900l-9-7.600" stroke="#454545" stroke-width="1.300" stroke-linecap="round"/>
<rect x="529.2" y="72.8" width="9.6" height="13.6" rx="2.4" fill="none" stroke="#454545" stroke-width="1.7"/>
<path d="M532.6 70.1h6.6a2.4 2.4 0 0 1 2.4 2.4v9.3a2.4 2.4 0 0 1-1.2 2" fill="none" stroke="#454545" stroke-width="1.7" stroke-linecap="round"/>
<rect x="578.900" y="72.400" width="10.300" height="14.400" rx="2.800" fill="none" stroke="#a6a6a6" stroke-width="1.400" stroke-dasharray="2.700 1.700"/>
<path d="M576.500 81.200V72.600a2.900 2.900 0 0 1 2.900-2.900h5.400" fill="none" stroke="#a6a6a6" stroke-width="1.400" stroke-linecap="round"/>
<path d="M618.9 70.9h14M623.3 70.7v-1.6a1 1 0 0 1 1-1h3a1 1 0 0 1 1 1v1.6" fill="none" stroke="#454545" stroke-width="1.3" stroke-linecap="round"/>
<path d="M620.2 71.5l0.9 11.8a1.6 1.6 0 0 0 1.6 1.5h5" fill="none" stroke="#454545" stroke-width="1.4" stroke-linecap="round"/><path d="M631.7 71.5l-0.5 6" stroke="#454545" stroke-width="1.4" stroke-linecap="round"/>
<circle cx="632.1" cy="83.7" r="6.3" fill="#ef1450"/>
<path d="M629.5 81.1l5.2 5.2M634.7 81.1l-5.2 5.2" stroke="#fff" stroke-width="1.9" stroke-linecap="round"/>
<path d="M685.6 71.9v14h-6.2z" fill="none" stroke="#595959" stroke-width="1.600" stroke-linejoin="round"/>
<path d="M689.6 71.9l7.4 14h-7.4z" fill="#595959" stroke="#595959" stroke-width="1.600" stroke-linejoin="round"/>
<path d="M743.2 69.2v6.800h-13.900z" fill="#595959" stroke="#595959" stroke-width="1.600" stroke-linejoin="round"/>
<path d="M729.6 80.3h13.6v6.500z" fill="none" stroke="#595959" stroke-width="1.600" stroke-linejoin="round"/>
<path d="M780.2 85.2a6.700 6.700 0 1 0-2.600-8.400" fill="none" stroke="#595959" stroke-width="2.800" stroke-linecap="round"/>
<path d="M772.2 76.600l8.200-2.200-1.800 8.400z" fill="#595959"/>
<circle cx="943.6" cy="70.6" r="1.9" fill="#12a568"/>
<path d="M934 75.2l3.8-2.6 3.6 1.2-2.6 5.4 3.8 2.6-0.6 5.4M938.8 79.2l-2.4 3.6-5 0.4M941.4 73.8l2.6 3 3.6 0.2" fill="none" stroke="#12a568" stroke-width="2" stroke-linecap="round" stroke-linejoin="round"/>
<path d="M1168.2 75.6h7.4l-3.7 3.7z" fill="#444"/>
<path d="M1215.6 73.6a6.4 6.4 0 1 0 1.6 3.4" fill="none" stroke="#454545" stroke-width="1.7" stroke-linecap="round"/>
<path d="M1215.5 82.2l4.8 4.8" stroke="#454545" stroke-width="1.8" stroke-linecap="round"/>
<path d="M1207.8 76.6l3.2 3.2 9.2-9.6" fill="none" stroke="#454545" stroke-width="1.7" stroke-linecap="round" stroke-linejoin="round"/>
<circle cx="22" cy="132.5" r="8.6" fill="none" stroke="#a6e5ce" stroke-width="1.7"/>
<circle cx="52" cy="132.5" r="8.6" fill="none" stroke="#f7c7b7" stroke-width="1.7"/>
<circle cx="25.8" cy="263.8" r="5" fill="none" stroke="#c9c9c9" stroke-width="1.4"/><path d="M29.6 267.6l4 4" stroke="#c9c9c9" stroke-width="1.4" stroke-linecap="round"/>
<path d="M288.2 259.2l6.8 7-6.8 7" fill="none" stroke="#a9a9a9" stroke-width="1.5" stroke-linecap="round" stroke-linejoin="round"/>
<path d="M19.4 382.6v9.6H9.6z" fill="#4a4a4a" stroke="#111" stroke-width="0.9" stroke-linejoin="round"/>
<path d="M31.2 387.2h13.4v8.2h-4.6v-4.6h-4.2v4.6h-4.6z" fill="#ffc107"/>
<path d="M37.9 380.6l-7.2 6.8v1.6h14.4v-1.6z" fill="#ffc107"/>
<path d="M29.6 386.4l8.3-7.6 8.3 7.6" fill="none" stroke="#8b6746" stroke-width="2.3" stroke-linecap="round" stroke-linejoin="round"/>
<path d="M33.4 411.8l7.4 5.7-7.4 5.7z" fill="#4a4a4a" stroke="#111" stroke-width="0.9" stroke-linejoin="round"/>
<rect x="57.5" y="409.3" width="15" height="15" rx="1.5" fill="#fff" stroke="#c9c9c9" stroke-width="1"/>
<path d="M60.9 413.1l8.4 7.8M69.3 413.1l-8.4 7.8" stroke="#c4c4c4" stroke-width="1.1"/>
<path d="M90 417.3l9.6 4.4-9.6 4.4-9.6-4.4z" fill="#bdc1cd"/>
<path d="M90 408.8l9.8 6.1-9.8 6.1-9.8-6.1z" fill="#1b80df"/>
<path d="M33.4 441.8l7.4 5.7-7.4 5.7z" fill="#4a4a4a" stroke="#111" stroke-width="0.9" stroke-linejoin="round"/>
<rect x="57.5" y="439.3" width="15" height="15" rx="1.5" fill="#fff" stroke="#c9c9c9" stroke-width="1"/>
<path d="M60.9 443.1l8.4 7.8M69.3 443.1l-8.4 7.8" stroke="#c4c4c4" stroke-width="1.1"/>
<path d="M90 447.3l9.6 4.4-9.6 4.4-9.6-4.4z" fill="#bdc1cd"/>
<path d="M90 438.8l9.8 6.1-9.8 6.1-9.8-6.1z" fill="#1b80df"/>
<path d="M33.4 471.8l7.4 5.7-7.4 5.7z" fill="#4a4a4a" stroke="#111" stroke-width="0.9" stroke-linejoin="round"/>
<rect x="57.5" y="469.3" width="15" height="15" rx="1.5" fill="#fff" stroke="#c9c9c9" stroke-width="1"/>
<path d="M60.9 473.1l8.4 7.8M69.3 473.1l-8.4 7.8" stroke="#c4c4c4" stroke-width="1.1"/>
<path d="M90 477.3l9.6 4.4-9.6 4.4-9.6-4.4z" fill="#bdc1cd"/>
<path d="M90 468.8l9.8 6.1-9.8 6.1-9.8-6.1z" fill="#1b80df"/>
<path d="M33.4 501.8l7.4 5.7-7.4 5.7z" fill="#4a4a4a" stroke="#111" stroke-width="0.9" stroke-linejoin="round"/>
<rect x="57.5" y="499.3" width="15" height="15" rx="1.5" fill="#fff" stroke="#c9c9c9" stroke-width="1"/>
<path d="M60.9 503.1l8.4 7.8M69.3 503.1l-8.4 7.8" stroke="#c4c4c4" stroke-width="1.1"/>
<path d="M90 507.3l9.6 4.4-9.6 4.4-9.6-4.4z" fill="#bdc1cd"/>
<path d="M90 498.8l9.8 6.1-9.8 6.1-9.8-6.1z" fill="#1b80df"/>
<path d="M33.4 531.8l7.4 5.7-7.4 5.7z" fill="#4a4a4a" stroke="#111" stroke-width="0.9" stroke-linejoin="round"/>
<rect x="57.5" y="529.3" width="15" height="15" rx="1.5" fill="#fff" stroke="#c9c9c9" stroke-width="1"/>
<path d="M60.9 533.1l8.4 7.8M69.3 533.1l-8.4 7.8" stroke="#c4c4c4" stroke-width="1.1"/>
<path d="M90 537.3l9.6 4.4-9.6 4.4-9.6-4.4z" fill="#bdc1cd"/>
<path d="M90 528.8l9.8 6.1-9.8 6.1-9.8-6.1z" fill="#1b80df"/>
<path d="M33.4 561.8l7.4 5.7-7.4 5.7z" fill="#4a4a4a" stroke="#111" stroke-width="0.9" stroke-linejoin="round"/>
<rect x="57.5" y="559.3" width="15" height="15" rx="1.5" fill="#fff" stroke="#c9c9c9" stroke-width="1"/>
<path d="M60.9 563.1l8.4 7.8M69.3 563.1l-8.4 7.8" stroke="#c4c4c4" stroke-width="1.1"/>
<path d="M90 567.3l9.6 4.4-9.6 4.4-9.6-4.4z" fill="#bdc1cd"/>
<path d="M90 558.8l9.8 6.1-9.8 6.1-9.8-6.1z" fill="#1b80df"/>
<path d="M33.4 591.8l7.4 5.7-7.4 5.7z" fill="#4a4a4a" stroke="#111" stroke-width="0.9" stroke-linejoin="round"/>
<rect x="57.5" y="589.3" width="15" height="15" rx="1.5" fill="#fff" stroke="#c9c9c9" stroke-width="1"/>
<path d="M60.9 593.1l8.4 7.8M69.3 593.1l-8.4 7.8" stroke="#c4c4c4" stroke-width="1.1"/>
<path d="M90 597.3l9.6 4.4-9.6 4.4-9.6-4.4z" fill="#bdc1cd"/>
<path d="M90 588.8l9.8 6.1-9.8 6.1-9.8-6.1z" fill="#1b80df"/>
<path d="M33.4 621.8l7.4 5.7-7.4 5.7z" fill="#4a4a4a" stroke="#111" stroke-width="0.9" stroke-linejoin="round"/>
<rect x="57.5" y="619.3" width="15" height="15" rx="1.5" fill="#fff" stroke="#c9c9c9" stroke-width="1"/>
<path d="M60.9 623.1l8.4 7.8M69.3 623.1l-8.4 7.8" stroke="#c4c4c4" stroke-width="1.1"/>
<path d="M90 627.3l9.6 4.4-9.6 4.4-9.6-4.4z" fill="#bdc1cd"/>
<path d="M90 618.8l9.8 6.1-9.8 6.1-9.8-6.1z" fill="#1b80df"/>
<path d="M33.4 651.8l7.4 5.7-7.4 5.7z" fill="#4a4a4a" stroke="#111" stroke-width="0.9" stroke-linejoin="round"/>
<rect x="57.5" y="649.3" width="15" height="15" rx="1.5" fill="#fff" stroke="#c9c9c9" stroke-width="1"/>
<path d="M60.9 653.1l8.4 7.8M69.3 653.1l-8.4 7.8" stroke="#c4c4c4" stroke-width="1.1"/>
<path d="M90 657.3l9.6 4.4-9.6 4.4-9.6-4.4z" fill="#bdc1cd"/>
<path d="M90 648.8l9.8 6.1-9.8 6.1-9.8-6.1z" fill="#1b80df"/>
<path d="M33.4 681.8l7.4 5.7-7.4 5.7z" fill="#4a4a4a" stroke="#111" stroke-width="0.9" stroke-linejoin="round"/>
<rect x="57.5" y="679.3" width="15" height="15" rx="1.5" fill="#fff" stroke="#c9c9c9" stroke-width="1"/>
<path d="M60.9 683.1l8.4 7.8M69.3 683.1l-8.4 7.8" stroke="#c4c4c4" stroke-width="1.1"/>
<path d="M90 687.3l9.6 4.4-9.6 4.4-9.6-4.4z" fill="#bdc1cd"/>
<path d="M90 678.8l9.8 6.1-9.8 6.1-9.8-6.1z" fill="#1b80df"/>
<path d="M335.2 154v18M326.2 163h18" stroke="#464a50" stroke-width="2.800"/>
<path d="M335.2 152l4.700 5h-9.400z" fill="#464a50" transform="rotate(0 335.2 163)"/>
<path d="M335.2 152l4.700 5h-9.400z" fill="#464a50" transform="rotate(90 335.2 163)"/>
<path d="M335.2 152l4.700 5h-9.400z" fill="#464a50" transform="rotate(180 335.2 163)"/>
<path d="M335.2 152l4.700 5h-9.400z" fill="#464a50" transform="rotate(270 335.2 163)"/>
<path d="M329.300 207.400a6.900 6.900 0 1 1 5.800 8.800" fill="none" stroke="#1676d3" stroke-width="3.100" stroke-linecap="round"/>
<path d="M323.800 207.400h10.400l-5.200 6.400z" fill="#1676d3"/>
<circle cx="336.2" cy="209" r="2.1" fill="#8f97c8"/>
<circle cx="333.500" cy="252" r="7.500" fill="none" stroke="#464a50" stroke-width="2.900"/>
<path d="M339.400 258l5.600 5.200" stroke="#464a50" stroke-width="3.200" stroke-linecap="round"/>
<path d="M329.500 252h8M333.500 248v8" stroke="#464a50" stroke-width="2.600"/>
<path d="M325 293.3v-4.6h4.6" fill="none" stroke="#5a6fa6" stroke-width="1.6"/>
<path d="M345.4 293.3v-4.6h-4.6" fill="none" stroke="#5a6fa6" stroke-width="1.6"/>
<path d="M325 304.5v4.6h4.6" fill="none" stroke="#5a6fa6" stroke-width="1.6"/>
<path d="M345.4 304.5v4.6h-4.6" fill="none" stroke="#5a6fa6" stroke-width="1.6"/>
<path d="M335.200 290.700l3.600 4.200h-2.500v2.300h-2.200v-2.300h-2.500z" fill="#1b80df" transform="rotate(0 335.2 298.9)"/>
<path d="M335.200 290.700l3.600 4.200h-2.500v2.300h-2.200v-2.300h-2.500z" fill="#1b80df" transform="rotate(90 335.2 298.9)"/>
<path d="M335.200 290.700l3.600 4.200h-2.500v2.300h-2.200v-2.300h-2.500z" fill="#1b80df" transform="rotate(180 335.2 298.9)"/>
<path d="M335.200 290.700l3.600 4.200h-2.500v2.300h-2.200v-2.300h-2.500z" fill="#1b80df" transform="rotate(270 335.2 298.9)"/>
<path d="M335.4 335.4l8.4 4.6-8.4 4.6-8.4-4.6z" fill="#ffb910"/>
<path d="M327 340v8.6l8.4 4.8v-8.8z" fill="#8e96c6"/>
<path d="M343.8 340v8.6l-8.4 4.8v-8.8z" fill="#a3abd6"/>
<rect x="324.2" y="397.8" width="21.8" height="21.8" rx="3.2" fill="#414a58"/>
<rect x="326.6" y="400.2" width="17" height="17" fill="#1b86ea"/>
<rect x="327.4" y="401" width="4.2" height="4.2" fill="#fff"/>
<rect x="327.4" y="406.7" width="4.2" height="4.2" fill="#fff"/>
<rect x="327.4" y="412.4" width="4.2" height="4.2" fill="#fff"/>
<rect x="333.1" y="401" width="4.2" height="4.2" fill="#fff"/>
<rect x="333.1" y="406.7" width="4.2" height="4.2" fill="#fff"/>
<rect x="333.1" y="412.4" width="4.2" height="4.2" fill="#fff"/>
<rect x="338.8" y="401" width="4.2" height="4.2" fill="#fff"/>
<rect x="338.8" y="406.7" width="4.2" height="4.2" fill="#fff"/>
<rect x="338.8" y="412.4" width="4.2" height="4.2" fill="#fff"/>
<path d="M335.2 458v-10" stroke="#1676d3" stroke-width="2.700"/><path d="M335.2 445l3.6 4.6h-7.2z" fill="#1676d3"/>
<path d="M335.2 458l-7.6 4.6" stroke="#ee2255" stroke-width="2.700"/><path d="M324.2 464.8l3-5.2 2.8 5z" fill="#ee2255"/>
<path d="M335.2 458l7.6 4.6" stroke="#1fcf8f" stroke-width="2.700"/><path d="M346.2 464.8l-3-5.2-2.8 5z" fill="#1fcf8f"/>
<path d="M326.6 492.6h3.2l1.6-2.8h7.4l1.6 2.8h3.2a2.4 2.4 0 0 1 2.4 2.4v10.6a2.4 2.4 0 0 1-2.4 2.4h-17a2.4 2.4 0 0 1-2.4-2.4V495a2.4 2.4 0 0 1 2.4-2.4z" fill="#454b59"/>
<circle cx="336.2" cy="499.8" r="4.4" fill="#7d84a6" stroke="#c9cde0" stroke-width="1.2"/>
<rect x="324.2" y="494" width="2.6" height="12" fill="#69718f"/>
<path d="M335.2 541.6l10.2 5.6-10.2 5.6-10.2-5.600z" fill="none" stroke="#1b80df" stroke-width="1.9" stroke-linejoin="round"/>
<path d="M335.2 535.8l10.6 5.6-10.6 5.6-10.6-5.6z" fill="#8f98c6"/>
<rect x="324.2" y="583.6" width="21.8" height="4.2" fill="#1b80df"/>
<path d="M328 587.800h5.400l-1.200 1.600v3h1.200v1.600h-5.400v-1.600h1.200v-3zM337 587.800h5.400l-1.200 1.600v3h1.200v1.600h-5.400v-1.600h1.200v-3z" fill="#7e8392"/>
<rect x="329.4" y="649" width="16" height="15.6" rx="1.6" fill="none" stroke="#50555c" stroke-width="1.7"/>
<path d="M325.6 660.6v-13a2.2 2.2 0 0 1 2.2-2.2h13" fill="none" stroke="#50555c" stroke-width="1.6"/>
<path d="M334.6 652.6l6.8 4.2-6.8 4.2z" fill="#50555c"/>
<path d="M1570 120.600l14 5-5.800 2.700z" fill="#6e7ba7"/>
<path d="M1570 120.600l8.200 7.700-2.600 5.600z" fill="#3b4067"/>
<path d="M1584.100 119.200h5v4.700M1569 134.200v4.800h5M1584.100 139h5v-4.800" fill="none" stroke="#6672a0" stroke-width="1.800"/>
<rect x="1568.400" y="160.200" width="21.400" height="20.400" rx="1.500" fill="#d9868c"/>
<rect x="1570" y="162.6" width="6.6" height="4" rx="0.8" fill="#f4b690"/>
<rect x="1578.2" y="162.6" width="10" height="4" rx="0.8" fill="#f4b690"/>
<rect x="1570" y="168.2" width="10.6" height="4" rx="0.8" fill="#f4b690"/>
<rect x="1582.2" y="168.2" width="6" height="4" rx="0.8" fill="#f4b690"/>
<rect x="1570" y="173.8" width="6.6" height="4" rx="0.8" fill="#f4b690"/>
<rect x="1578.2" y="173.8" width="10" height="4" rx="0.8" fill="#f4b690"/>
<path d="M1573.800 205.200h10.600l5.400 10.800v3.200a1.600 1.600 0 0 1-1.600 1.600h-18.200a1.600 1.600 0 0 1-1.600-1.600v-3.200z" fill="#bcc1db"/>
<path d="M1568.400 216h21.400v3.200a1.600 1.600 0 0 1-1.600 1.600h-18.200a1.600 1.600 0 0 1-1.600-1.600z" fill="#b1b7d3"/>
<path d="M1589.800 247.600v5h-7.200v4.600h-7v4.400h-7.200v-4.600h7.200v-4.600h7.200v-4.800z" fill="#c9cde0"/>
<path d="M1589.800 250.800v1.800l-14.200 9h-7.200z" fill="#b3b8d2"/>
<rect x="1568.400" y="292" width="21.400" height="4.200" rx="0.8" fill="#f8de72"/>
<path d="M1571.600 296.200h5.800l-1.400 1.400v2.400h1.400v1.500h-5.800v-1.500h1.400v-2.400zM1581 296.200h5.800l-1.400 1.400v2.400h1.400v1.500h-5.800v-1.500h1.400v-2.400z" fill="#a9adbd"/>
<rect x="1572" y="327.600" width="14" height="19.600" fill="#d5b6a0"/>
<rect x="1573.800" y="329.400" width="10.400" height="17.800" fill="#eedccb"/>
<circle cx="1581.800" cy="338.600" r="1" fill="#c2a08a"/>
<rect x="1569" y="347" width="20" height="2.600" fill="#aab3d2"/>
<rect x="1568.400" y="369.800" width="21.400" height="22" rx="3" fill="#9096ae"/>
<rect x="1571" y="372.600" width="5.200" height="16.400" fill="#a9d2f3"/><rect x="1578.200" y="372.600" width="9" height="16.400" fill="#a9d2f3"/>
<path d="M1578.200 381l9-8.400v8z" fill="#c4e2fa"/>
<path d="M1576.400 432.900h-4.600a2.600 2.600 0 0 1-2.600-2.600v-14.600a2.600 2.600 0 0 1 2.600-2.600h14.600a2.600 2.600 0 0 1 2.600 2.600v14.600a2.600 2.600 0 0 1-2.600 2.600h-4.600" fill="#eef2fc" stroke="#d67a84" stroke-width="2.200"/>
<path d="M1586.400 459.400v-4.400h-15v19.400h15v-4.400" fill="none" stroke="#6dcfa9" stroke-width="3.200"/>
<path d="M1576.600 464.700h8" stroke="#6dcfa9" stroke-width="3.200"/><path d="M1582.600 459.700l5.800 5-5.800 5z" fill="#6dcfa9"/>
<circle cx="1579" cy="498.700" r="2.700" fill="#f9b98c"/>
<path d="M1575.400 502.400h7.200l4.600 4.400-1.800 1.800-3-2.400v11.600h-2.700v-5.800h-1.400v5.800h-2.700v-11.600l-3 2.400-1.800-1.800z" fill="#f9b98c" stroke="#f9b98c" stroke-width="0.600" stroke-linejoin="round"/>
<path d="M1584.500 542.900h-10.600a3.600 3.600 0 0 0 0 7.200h10a3.600 3.600 0 0 1 0 7.200h-12.600" fill="none" stroke="#f58c90" stroke-width="3"/>
<path d="M1583.400 538.400l6.200 4.500-6.200 4.500z" fill="#f58c90"/><circle cx="1570.600" cy="557.300" r="2.400" fill="#f58c90"/><circle cx="1576.400" cy="550.100" r="1.900" fill="#f58c90"/>
<rect x="1570.800" y="582.600" width="16.600" height="17" fill="#eceef8" stroke="#b3bad3" stroke-width="2.800"/>
<rect x="1568.2" y="580" width="5.200" height="5.200" rx="0.800" fill="#b3bad3"/>
<rect x="1584.8" y="580" width="5.200" height="5.200" rx="0.800" fill="#b3bad3"/>
<rect x="1568.2" y="597" width="5.200" height="5.200" rx="0.800" fill="#b3bad3"/>
<rect x="1584.8" y="597" width="5.200" height="5.200" rx="0.800" fill="#b3bad3"/>
<path d="M1575 588h8.200M1575 591.200h8.200M1575 594.400h5.400" stroke="#b3bad3" stroke-width="2.200"/>
<path d="M1579.600 621.200c1.400 3.600 7.600 6.600 7.600 13.600a7.800 7.800 0 0 1-5 8c1.400-2.600 0.200-5.600-2.600-7.400-2.800 1.800-3.800 4.800-2.400 7.400a7.800 7.800 0 0 1-5.400-8c0-3.200 2-5 3.400-7 0.400 1.400 1 2.400 2 3 1.800-2.800 2.800-5.800 2.400-9.600z" fill="#f9b58c"/>
<circle cx="1579" cy="674.900" r="9.800" fill="#e2e5f4" stroke="#9a9db0" stroke-width="2.800"/>
<path d="M1579 674.900c-1.600-3.400-0.400-6.400 3-7.400 0.800 3.400-0.400 5.800-3 7.400z" fill="#9a9db0" transform="rotate(0 1579 674.900)"/>
<path d="M1579 674.900c-1.600-3.400-0.400-6.400 3-7.400 0.800 3.400-0.400 5.800-3 7.400z" fill="#9a9db0" transform="rotate(90 1579 674.900)"/>
<path d="M1579 674.900c-1.600-3.400-0.400-6.400 3-7.400 0.800 3.400-0.400 5.800-3 7.400z" fill="#9a9db0" transform="rotate(180 1579 674.900)"/>
<path d="M1579 674.900c-1.600-3.400-0.400-6.400 3-7.400 0.800 3.400-0.400 5.800-3 7.400z" fill="#9a9db0" transform="rotate(270 1579 674.900)"/>
<rect x="1569.200" y="709" width="19.800" height="16.400" rx="1.800" fill="#9094a8" stroke="#c4cae6" stroke-width="2"/>
<path d="M1572.800 717.600c1.600-3.200 3.400-3.200 5 0s3.400 3.200 5 0 2.200-1.400 2.600-0.800" fill="none" stroke="#4fd6a6" stroke-width="1.600"/>
<rect x="1568.400" y="753.800" width="21.400" height="9.200" rx="4" fill="#f6d468"/>
<rect x="1577.400" y="753.800" width="12.400" height="9.200" fill="#f6d468"/>
<circle cx="1573" cy="758.400" r="2" fill="#fafafa"/>
<path d="M1578.800 753.800v4.400M1582.400 753.800v3M1586 753.800v4.400" stroke="#8d8672" stroke-width="1.800"/>
<path d="M1571.600 794.600v-2.400h15.800v2.400M1579.500 792.600v16.600M1576 809.400h7" fill="none" stroke="#9293a2" stroke-width="3" stroke-linecap="round" stroke-linejoin="round"/>
<path d="M1570.600 845.200l5.600-9.400 7.400 4.400-5.600 9.400z" fill="#f7d467"/>
<path d="M1576.200 835.800l0.800-1.400a3.200 3.200 0 0 1 4.400-1.100l2 1.200a3.200 3.200 0 0 1 1.100 4.400l-0.900 1.300z" fill="#f0638f"/>
<path d="M1570.600 845.200l7.400 4.400-7 2.400z" fill="#80828f"/>
<rect x="1572.200" y="851.200" width="17.400" height="2.800" rx="1" fill="#5aaae9"/>
<path d="M1569.400 877.200v16M1588.600 877.200v16" stroke="#b3bad3" stroke-width="1.600"/>
<path d="M1574 882.700h10" stroke="#f7cd58" stroke-width="2.400"/><path d="M1570.800 882.700l5.400-4.200v8.400zM1587.200 882.700l-5.400-4.200v8.400z" fill="#f7cd58"/>
<path d="M1582.400 922.800h3.600a2.600 2.600 0 0 1 2.600 2.600v7.600a2.600 2.600 0 0 1-2.600 2.600h-7.600a2.600 2.600 0 0 1-2.600-2.600v-4.600" fill="none" stroke="#9a9cab" stroke-width="2.300" stroke-linecap="round"/>
<path d="M1572.700 922.800l8.600 6.400M1579 922.800l-8.600 6.400" stroke="#9a9cab" stroke-width="2.200" stroke-linecap="round"/>
<circle cx="1571.400" cy="920.700" r="2.100" fill="#fafafa" stroke="#f0638f" stroke-width="1.700"/><circle cx="1580.300" cy="920.700" r="2.100" fill="#fafafa" stroke="#f0638f" stroke-width="1.700"/>
<rect x="1724.100" y="156.500" width="17.900" height="13.500" rx="1" fill="none" stroke="#3a3a3a" stroke-width="1.200" stroke-dasharray="3.400 2"/>
<path d="M1761.500 173.200L1756.400 165.700L1757.500 158.400L1768.300 154L1774.800 165.200" fill="none" stroke="#333" stroke-width="1.300" stroke-dasharray="2.600 1.900" stroke-linejoin="round"/>
<path d="M1761.700 172.800L1767.300 162.400L1774.600 165.200" fill="none" stroke="#333" stroke-width="1.300" stroke-dasharray="2.600 1.900" stroke-linejoin="round"/>
<circle cx="1632" cy="209.900" r="11.200" fill="#fff" stroke="#2a2a2a" stroke-width="1.500"/>
<path d="M1627.800 211.400l4.200-4.200 4.200 4.200" fill="none" stroke="#333" stroke-width="2.500" stroke-linejoin="miter"/>
<circle cx="1651.900" cy="233.1" r="6.950" fill="#fff" stroke="#2486e4" stroke-width="1.500"/>
<circle cx="1651.900" cy="253.1" r="6.950" fill="#fff" stroke="#2486e4" stroke-width="1.500"/>
<circle cx="1651.900" cy="273.1" r="6.950" fill="#fff" stroke="#2486e4" stroke-width="1.500"/>
<circle cx="1651.900" cy="293.1" r="6.950" fill="#fff" stroke="#2486e4" stroke-width="1.500"/>
<circle cx="1651.900" cy="313.1" r="6.950" fill="#fff" stroke="#2486e4" stroke-width="1.500"/>
<circle cx="1651.900" cy="333.1" r="6.950" fill="#fff" stroke="#2486e4" stroke-width="1.500"/>
<circle cx="1651.900" cy="353.1" r="6.950" fill="#fff" stroke="#2486e4" stroke-width="1.500"/>
<circle cx="1651.900" cy="373.1" r="6.950" fill="#fff" stroke="#2486e4" stroke-width="1.500"/>
<circle cx="1651.900" cy="393.1" r="6.950" fill="#fff" stroke="#2486e4" stroke-width="1.500"/>
</svg>
<span class="t" style="left:5.09px;top:6.85px;font-size:14px;font-weight:400;color:#444;transform:scaleX(0.8143);">F</span>
<span class="t" style="left:12.30px;top:4.91px;font-size:17px;font-weight:400;color:#ee2266;transform:scaleX(0.8000);">+</span>
<span class="t" style="left:26.80px;top:7.00px;font-size:15px;font-weight:400;color:#000;transform:scaleX(0.9963);">Fenix+ 3 Ultimate — Жилой дом (1-4).fnx</span>
<span class="t" style="left:7.80px;top:35.95px;font-size:14px;font-weight:400;color:#1a1a1a;transform:scaleX(0.9343);">Файл</span>
<span class="t" style="left:54.64px;top:35.95px;font-size:14px;font-weight:400;color:#1a1a1a;transform:scaleX(0.9633);">Правка</span>
<span class="t" style="left:115.58px;top:35.95px;font-size:14px;font-weight:400;color:#1a1a1a;transform:scaleX(0.9231);">Вид</span>
<span class="t" style="left:153.82px;top:35.95px;font-size:14px;font-weight:400;color:#1a1a1a;transform:scaleX(0.9759);">Проект</span>
<span class="t" style="left:214.42px;top:35.95px;font-size:14px;font-weight:400;color:#1a1a1a;transform:scaleX(0.9811);">Инструменты</span>
<span class="t" style="left:315.00px;top:35.95px;font-size:14px;font-weight:400;color:#1a1a1a;transform:scaleX(0.9456);">Отчет</span>
<span class="t" style="left:366.80px;top:35.95px;font-size:14px;font-weight:400;color:#1a1a1a;transform:scaleX(1.0179);">Справочники</span>
<span class="t" style="left:466.30px;top:35.95px;font-size:14px;font-weight:400;color:#1a1a1a;transform:scaleX(0.9974);">Моделирование</span>
<span class="t" style="left:584.99px;top:35.95px;font-size:14px;font-weight:400;color:#1a1a1a;transform:scaleX(1.0086);">Настройки</span>
<span class="t" style="left:668.29px;top:35.95px;font-size:14px;font-weight:400;color:#1a1a1a;transform:scaleX(1.0137);">Помощь</span>
<span class="t" style="left:803.00px;top:71.46px;font-size:16px;font-weight:400;color:#111;transform:scaleX(0.9773);">Угол:</span>
<span class="t" style="left:848.30px;top:71.26px;font-size:16px;font-weight:400;color:#111;transform:scaleX(0.9444);">0</span>
<span class="t" style="left:887.40px;top:57.45px;font-size:14px;font-weight:400;color:#111;transform:scaleX(0.9600);">°</span>
<span class="t" style="left:952.70px;top:71.48px;font-size:15.5px;font-weight:400;color:#111;transform:scaleX(0.9976);">Моделирование эвакуации</span>
<span class="t" style="left:69.00px;top:124.58px;font-size:15.5px;font-weight:400;color:#111;transform:scaleX(0.9483);">Сценарий 1</span>
<span class="t" style="left:43.02px;top:259.00px;font-size:15px;font-weight:400;color:#8a8a8a;transform:scaleX(0.9798);">Поиск элемента...</span>
<span class="t" style="left:23.06px;top:322.88px;font-size:15.5px;font-weight:700;color:#111;transform:scaleX(0.9440);">Иерархическое</span>
<span class="t" style="left:181.46px;top:322.88px;font-size:15.5px;font-weight:700;color:#8c8c8c;transform:scaleX(0.9424);">Компонентное</span>
<span class="t" style="left:56.30px;top:379.38px;font-size:15.5px;font-weight:400;color:#111;transform:scaleX(0.9360);">Здание</span>
<span class="t" style="left:107.40px;top:409.58px;font-size:15.5px;font-weight:400;color:#111;transform:scaleX(0.9417);">Этаж 12</span>
<span class="t" style="left:107.40px;top:439.58px;font-size:15.5px;font-weight:400;color:#111;transform:scaleX(0.9519);">Этаж 11</span>
<span class="t" style="left:107.40px;top:469.58px;font-size:15.5px;font-weight:400;color:#111;transform:scaleX(0.9308);">Этаж 10</span>
<span class="t" style="left:107.40px;top:499.58px;font-size:15.5px;font-weight:400;color:#111;transform:scaleX(0.9441);">Этаж 9</span>
<span class="t" style="left:107.40px;top:529.58px;font-size:15.5px;font-weight:400;color:#111;transform:scaleX(0.9441);">Этаж 8</span>
<span class="t" style="left:107.40px;top:559.58px;font-size:15.5px;font-weight:400;color:#111;transform:scaleX(0.9441);">Этаж 7</span>
<span class="t" style="left:107.40px;top:589.58px;font-size:15.5px;font-weight:400;color:#111;transform:scaleX(0.9313);">Этаж 4</span>
<span class="t" style="left:107.40px;top:619.58px;font-size:15.5px;font-weight:400;color:#111;transform:scaleX(0.9441);">Этаж 3</span>
<span class="t" style="left:107.40px;top:649.58px;font-size:15.5px;font-weight:400;color:#111;transform:scaleX(0.9441);">Этаж 2</span>
<span class="t" style="left:107.40px;top:679.58px;font-size:15.5px;font-weight:400;color:#111;transform:scaleX(0.9299);">Этаж 1</span>
<span class="t" style="left:332.00px;top:116.18px;font-size:15.5px;font-weight:400;color:#8a8a8a;transform:scaleX(0.9776);">Добро пожаловать</span>
<span class="t" style="left:503.20px;top:116.18px;font-size:15.5px;font-weight:400;color:#111;transform:scaleX(0.9341);">Здание</span>
<span class="t" style="left:590.01px;top:116.18px;font-size:15.5px;font-weight:400;color:#8a8a8a;transform:scaleX(0.9899);">Моделирование</span>
<span class="t" style="left:742.06px;top:116.18px;font-size:15.5px;font-weight:400;color:#8a8a8a;transform:scaleX(0.9442);">Результаты</span>
<span class="t" style="left:856.85px;top:116.18px;font-size:15.5px;font-weight:400;color:#8a8a8a;transform:scaleX(0.9471);">Расчет риска</span>
<span class="t" style="left:1724.20px;top:119.80px;font-size:15px;font-weight:700;color:#111;transform:scaleX(0.9690);">Указатель</span>
<span class="t" style="left:1649.10px;top:202.68px;font-size:15.5px;font-weight:400;color:#111;transform:scaleX(0.9431);">Тип элемента сцены</span>
<span class="t" style="left:1664.95px;top:226.00px;font-size:15px;font-weight:400;color:#111;transform:scaleX(0.9540);">Выход</span>
<span class="t" style="left:1665.30px;top:246.00px;font-size:15px;font-weight:400;color:#111;transform:scaleX(0.9896);">Дверь</span>
<span class="t" style="left:1665.30px;top:266.00px;font-size:15px;font-weight:400;color:#111;transform:scaleX(0.9654);">Лестница</span>
<span class="t" style="left:1665.30px;top:286.00px;font-size:15px;font-weight:400;color:#111;transform:scaleX(1.0344);">Окно</span>
<span class="t" style="left:1664.90px;top:306.00px;font-size:15px;font-weight:400;color:#111;transform:scaleX(1.0043);">Перекрытие</span>
<span class="t" style="left:1664.94px;top:326.00px;font-size:15px;font-weight:400;color:#111;transform:scaleX(0.9617);">Площадка</span>
<span class="t" style="left:1664.89px;top:346.00px;font-size:15px;font-weight:400;color:#111;transform:scaleX(1.0079);">Помещение</span>
<span class="t" style="left:1665.90px;top:366.00px;font-size:15px;font-weight:400;color:#111;transform:scaleX(0.8943);">Стена</span>
<span class="t" style="left:1664.70px;top:386.00px;font-size:15px;font-weight:400;color:#111;transform:scaleX(1.0009);">Человек</span>
<span class="t" style="left:16.00px;top:1002.74px;font-size:12px;font-weight:400;color:#111;transform:scaleX(0.7725);">X:</span>
<span class="t" style="left:34.00px;top:1002.74px;font-size:12px;font-weight:400;color:#111;transform:scaleX(0.9718);">6,642</span>
<span class="t" style="left:128.30px;top:1002.74px;font-size:12px;font-weight:400;color:#111;transform:scaleX(0.7929);">Y:</span>
<span class="t" style="left:146.70px;top:1002.74px;font-size:12px;font-weight:400;color:#111;transform:scaleX(0.9668);">17,702</span>
<span class="t" style="left:240.00px;top:1002.74px;font-size:12px;font-weight:400;color:#111;transform:scaleX(0.7744);">Z:</span>
<span class="t" style="left:258.30px;top:1002.74px;font-size:12px;font-weight:400;color:#111;transform:scaleX(0.9873);">18</span>
<span class="t" style="left:376.60px;top:953.95px;font-size:14px;font-weight:700;color:#111;transform:scaleX(1.0888);">5 м</span>
</body></html>
